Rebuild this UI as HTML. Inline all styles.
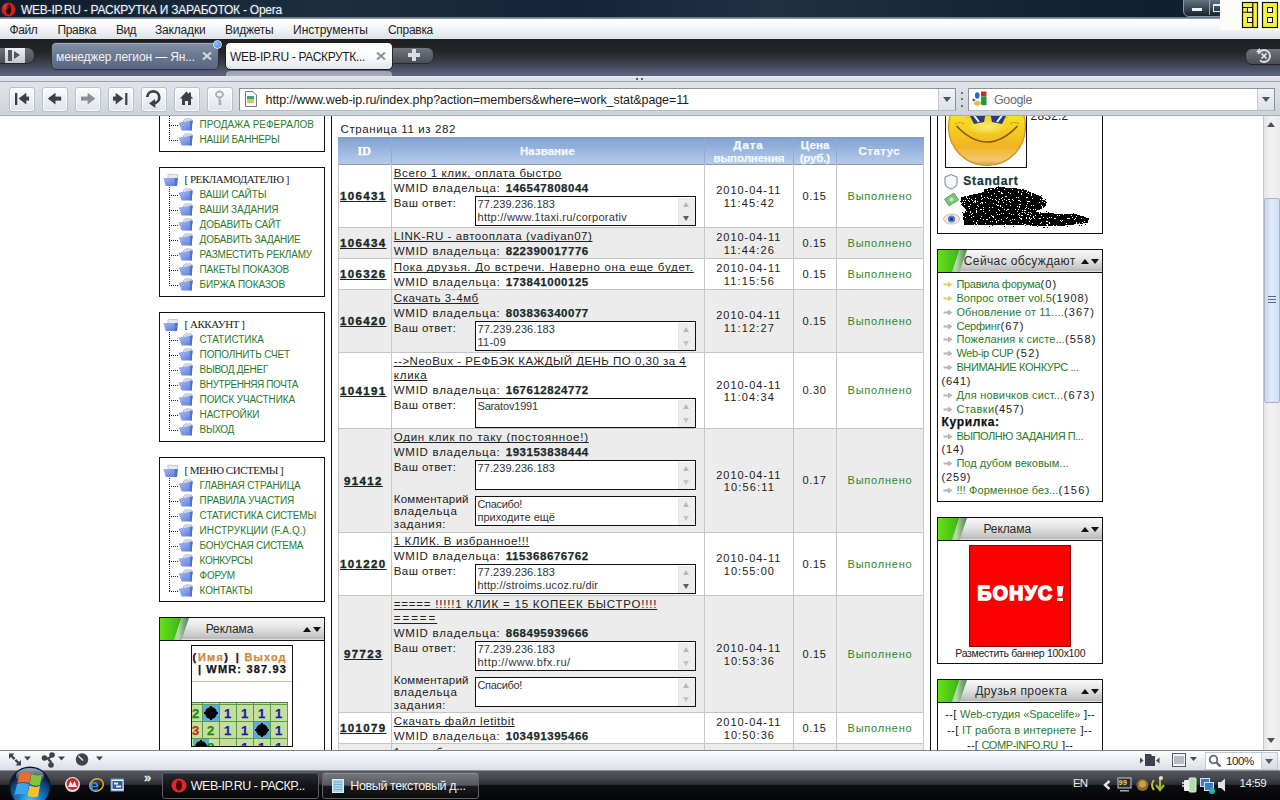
<!DOCTYPE html>
<html><head><meta charset="utf-8">
<style>
*{margin:0;padding:0;box-sizing:border-box}
html,body{width:1280px;height:800px;overflow:hidden;background:#fff;font-family:"Liberation Sans",sans-serif;position:relative}
.a{position:absolute}
.t{position:absolute;white-space:nowrap;text-decoration-skip-ink:none}
.bp{display:inline-block;width:0;height:0;vertical-align:baseline}
.tbtn{position:absolute;top:87px;width:26px;height:25px;border:1px solid #b9c0c8;border-radius:3px;background:linear-gradient(#fbfcfd,#eceff2 50%,#dfe3e8);box-shadow:inset 0 0 0 1px rgba(255,255,255,.8)}
.box{position:absolute;border:1px solid #111;background:#fff}
.gh{position:absolute;height:24px;border:1px solid #111;background:linear-gradient(#f8f8f8 0%,#e6e6e6 40%,#c4c4c4 85%,#b5b5b5 92%,#f0f0f0 100%);overflow:hidden}
.gh .g1{position:absolute;left:0;top:0;width:30px;height:22px;background:linear-gradient(90deg,#68e018,#44c014 55%,#2a9a10 85%,#1e7a0c);clip-path:polygon(0 0,21.5px 0,14px 22px,0 22px)}
.gh .g2{position:absolute;left:0;top:0;width:30px;height:22px;background:linear-gradient(90deg,#8ccc80 40%,#b8dcb0 60%,#7aa874 80%,#5a7a56);clip-path:polygon(21.5px 0,29px 0,21.5px 22px,14px 22px)}
.ta{position:absolute;width:221px;height:30px;border:1px solid #111;background:#fff}
.ta .sb{position:absolute;right:0;top:1px;width:17px;height:27px;background:#ededed;border-left:1px solid #e4e4e4}
.up{position:absolute;width:0;height:0;border-left:3.5px solid transparent;border-right:3.5px solid transparent;border-bottom:5px solid #b8b8b8}
.dn{position:absolute;width:0;height:0;border-left:3.5px solid transparent;border-right:3.5px solid transparent;border-top:5px solid #bcbcbc}
.row{position:absolute;left:339px;width:584px;border-bottom:1px solid #c6c6c6}
.vl{position:absolute;width:1px;background:#c6c6c6}
.dotv{position:absolute;width:1px;background:repeating-linear-gradient(#222 0 1px,transparent 1px 2px)}
.doth{position:absolute;height:1px;background:repeating-linear-gradient(90deg,#222 0 1px,transparent 1px 2px)}
</style></head><body>

<div class="a" style="left:0;top:0;width:1280px;height:19px;background:linear-gradient(90deg,#0e1c2c 0%,#1c2d40 25%,#13253a 45%,#1e3044 60%,#132438 80%,#0e1c2c 100%)"></div>
<div class="a" style="left:0;top:17px;width:1280px;height:2px;background:linear-gradient(#5a6a7a,#9aa6b2)"></div>
<div class="a" style="left:0;top:19px;width:1280px;height:20px;background:linear-gradient(#ffffff,#f4f6f8 45%,#dde3e9)"></div>
<div class="a" style="left:0;top:39px;width:1280px;height:37px;background:linear-gradient(#1e1f21 0%,#242527 35%,#3a3d47 62%,#535a70 88%,#5c6580 100%)"></div>
<div class="a" style="left:0;top:76px;width:1280px;height:6px;background:linear-gradient(#e4e8ec,#d7dce1)"></div>
<div class="a" style="left:0;top:81px;width:1280px;height:1px;background:#9da5ae"></div>
<div class="a" style="left:0;top:82px;width:1280px;height:34px;background:linear-gradient(#dfe4e9,#d8dde3 50%,#ccd2d9)"></div>
<div class="a" style="left:0;top:115px;width:1280px;height:1px;background:#a4acb4"></div>
<svg class="a" style="left:1px;top:2px" width="16" height="15" viewBox="0 0 16 15"><ellipse cx="7.5" cy="7.5" rx="7" ry="7" fill="#d01c20"/><ellipse cx="7.5" cy="7.5" rx="2.6" ry="5" fill="#2a0808"/><ellipse cx="5" cy="5" rx="2.5" ry="3" fill="#ff7060" opacity=".35"/></svg>
<div class="t" style="left:21.00px;top:3.50px;font-size:12px;line-height:12px;color:#f3f7fa;font-family:'Liberation Sans',sans-serif;letter-spacing:-0.237px;text-shadow:0 0 2px rgba(200,220,240,.35);">WEB-IP.RU - РАСКРУТКА И ЗАРАБОТОК - Opera</div>
<div class="a" style="left:1183px;top:-3px;width:52px;height:20px;border:1px solid #8996a3;border-radius:0 0 6px 6px;background:linear-gradient(#707d8a,#3d4a57 55%,#18222d)"></div>
<div class="a" style="left:1192px;top:8px;width:10px;height:3px;background:#eef2f5"></div>
<div class="a" style="left:1209px;top:-1px;width:1px;height:16px;background:#97a3af"></div>
<div class="a" style="left:1213px;top:4px;width:9px;height:8px;border:1.5px solid #e8ecf0;border-top-width:2.5px;background:transparent"></div>
<div class="a" style="left:1220px;top:0;width:60px;height:30px;background:#fcfdf8"></div>
<svg class="a" style="left:1240px;top:0" width="40" height="30" viewBox="0 0 40 30">
<rect x="2.5" y="2.5" width="15" height="25" fill="#f6f33c" stroke="#111" stroke-width="1.2"/>
<path d="M12.8 3 V27" stroke="#111" stroke-width="1.2"/>
<path d="M3 7.5 H12.8 M3 12.2 H12.8 M7.5 8 V12" stroke="#111" stroke-width="1"/>
<rect x="7.5" y="7.5" width="5" height="4.7" fill="#fff" stroke="#111" stroke-width="1"/>
<rect x="7.5" y="17.5" width="5" height="5" fill="#fff" stroke="#111" stroke-width="1"/>
<rect x="22.5" y="2.5" width="15" height="25" fill="#f6f33c" stroke="#111" stroke-width="1.2"/>
<rect x="27.5" y="7.5" width="5" height="5" fill="#fff" stroke="#111" stroke-width="1"/>
<rect x="27.5" y="17.5" width="5" height="5" fill="#fff" stroke="#111" stroke-width="1"/>
</svg>
<div class="t" style="left:9.50px;top:23.50px;font-size:12px;line-height:12px;color:#1e1e1e;font-family:'Liberation Sans',sans-serif;letter-spacing:-0.379px;">Файл</div>
<div class="t" style="left:57.50px;top:23.50px;font-size:12px;line-height:12px;color:#1e1e1e;font-family:'Liberation Sans',sans-serif;letter-spacing:-0.341px;">Правка</div>
<div class="t" style="left:116.00px;top:23.50px;font-size:12px;line-height:12px;color:#1e1e1e;font-family:'Liberation Sans',sans-serif;letter-spacing:-0.573px;">Вид</div>
<div class="t" style="left:155.00px;top:23.50px;font-size:12px;line-height:12px;color:#1e1e1e;font-family:'Liberation Sans',sans-serif;letter-spacing:-0.180px;">Закладки</div>
<div class="t" style="left:225.00px;top:23.50px;font-size:12px;line-height:12px;color:#1e1e1e;font-family:'Liberation Sans',sans-serif;letter-spacing:-0.234px;">Виджеты</div>
<div class="t" style="left:293.00px;top:23.50px;font-size:12px;line-height:12px;color:#1e1e1e;font-family:'Liberation Sans',sans-serif;letter-spacing:0.016px;">Инструменты</div>
<div class="t" style="left:388.00px;top:23.50px;font-size:12px;line-height:12px;color:#1e1e1e;font-family:'Liberation Sans',sans-serif;letter-spacing:-0.297px;">Справка</div>
<div class="a" style="left:-8px;top:47px;width:43px;height:17px;border-radius:8px;background:linear-gradient(#6b7079,#4a4e56);border:1px solid #25272b"></div>
<div class="a" style="left:5px;top:48px;width:20px;height:15px;background:linear-gradient(#eef0f2,#c3c8ce)"></div>
<div class="a" style="left:8px;top:50px;width:4px;height:11px;background:#50545c"></div>
<div class="a" style="left:14px;top:51px;width:0;height:0;border-top:4.5px solid transparent;border-bottom:4.5px solid transparent;border-left:6px solid #50545c"></div>
<div class="a" style="left:51px;top:42px;width:168px;height:28px;border-radius:5px;background:linear-gradient(#8391a8,#6c7992 45%,#5a667f);border:1px solid #2c313c;box-shadow:inset 0 1px 0 rgba(255,255,255,.25)"></div>
<div class="a" style="left:213px;top:40px;width:9px;height:9px;border-radius:50%;background:radial-gradient(circle at 40% 40%,#8ec0ff,#3a7fd8);border:1px solid #e0e8f4"></div>
<div class="t" style="left:56.00px;top:51.30px;font-size:12px;line-height:12px;color:#f0f3f7;font-family:'Liberation Sans',sans-serif;letter-spacing:-0.118px;">менеджер легион — Ян...</div>
<svg class="a" style="left:201px;top:51px" width="12" height="10"><path d="M2 1.5 L10 8.5 M10 1.5 L2 8.5" stroke="#d3d8df" stroke-width="2.2"/></svg>
<div class="a" style="left:225px;top:42px;width:168px;height:28px;border-radius:5px;background:linear-gradient(#ffffff,#fafbfc 55%,#e2e6ec);border:1px solid #1a1c20"></div>
<div class="a" style="left:226px;top:71px;width:166px;height:5px;border-radius:4px 4px 0 0;background:linear-gradient(#9aa0b2,#a8aebd)"></div>
<div class="t" style="left:230.00px;top:51.00px;font-size:12px;line-height:12px;color:#1c1c1c;font-family:'Liberation Sans',sans-serif;letter-spacing:-0.336px;">WEB-IP.RU - РАСКРУТК...</div>
<svg class="a" style="left:375px;top:51px" width="12" height="10"><path d="M2 1.5 L10 8.5 M10 1.5 L2 8.5" stroke="#8f949b" stroke-width="2.2"/></svg>
<div class="a" style="left:392px;top:47px;width:42px;height:17px;border-radius:0 7px 7px 0;background:linear-gradient(#70757e,#4a4e57);border:1px solid #27292d"></div>
<div class="a" style="left:408px;top:53px;width:12px;height:4px;background:#d9dce1"></div>
<div class="a" style="left:412px;top:49px;width:4px;height:12px;background:#d9dce1"></div>
<div class="a" style="left:1245px;top:48px;width:42px;height:17px;border-radius:7px;background:linear-gradient(#70757e,#484c55);border:1px solid #222428"></div>
<svg class="a" style="left:1250px;top:45px" width="30" height="22"><circle cx="14" cy="11" r="6" fill="none" stroke="#dde1e6" stroke-width="1.8" stroke-dasharray="30 8" transform="rotate(200 14 11)"/><path d="M9.5 3 L6 7 L11 8 Z" fill="#dde1e6"/><path d="M11.5 8.5 L16.5 13.5 M16.5 8.5 L11.5 13.5" stroke="#e6e9ed" stroke-width="1.7"/></svg>
<div class="a" style="left:636px;top:78px;width:2px;height:2px;background:#5a5f66"></div>
<div class="a" style="left:641px;top:78px;width:2px;height:2px;background:#5a5f66"></div>
<div class="tbtn" style="left:9px"></div>
<div class="tbtn" style="left:42px"></div>
<div class="tbtn" style="left:75px"></div>
<div class="tbtn" style="left:108px"></div>
<div class="tbtn" style="left:141px"></div>
<div class="tbtn" style="left:174px"></div>
<div class="tbtn" style="left:207px"></div>
<svg class="a" style="left:0;top:82px" width="240" height="34" viewBox="0 0 240 34">
 <g fill="#3b4049">
  <rect x="15" y="11" width="2.3" height="12"/>
  <path d="M18.6 16.6 L26.3 10.8 V22.4 Z"/><rect x="25.5" y="14.6" width="3.6" height="4"/>
  <path d="M47.8 16.6 L55.5 10.8 V22.4 Z"/><rect x="55" y="14.6" width="6.2" height="4"/>
  <path d="M95.3 16.6 L87.6 10.8 V22.4 Z" fill="#8a8f97"/><rect x="81" y="14.6" width="7" height="4" fill="#8a8f97"/>
  <rect x="113" y="14.6" width="4" height="4"/><path d="M123.3 16.6 L115.6 10.8 V22.4 Z"/>
  <rect x="125.2" y="11" width="2.2" height="12"/>
  <path d="M147.3 15 A6 6 0 1 1 154 21.3" fill="none" stroke="#3b4049" stroke-width="2.7"/>
  <path d="M149 21.5 L155 17 L155.5 26 Z"/>
  <path d="M186.5 9.5 L179.8 16.5 H182 V23 H185 V19 H188 V23 H191 V16.5 H193.2 Z"/>
  <rect x="189" y="10.5" width="2" height="4"/>
 </g>
 <g fill="none" stroke="#a9aeb5" stroke-width="1.8">
  <ellipse cx="219.5" cy="12.5" rx="3.5" ry="3"/>
  <path d="M219.5 15.5 V23 M219.5 19.5 H221.5 M219.5 22 H221.5"/>
 </g>
</svg>
<div class="a" style="left:239px;top:88px;width:717px;height:23px;background:#fff;border:1px solid #8a9199;border-bottom-color:#b5bbc2"></div>
<div class="a" style="left:938px;top:89px;width:17px;height:21px;background:linear-gradient(#f3f5f7,#dde1e6);border-left:1px solid #c4c9cf"></div>
<div class="a" style="left:942.5px;top:97px;width:0;height:0;border-left:4px solid transparent;border-right:4px solid transparent;border-top:5px solid #4e5661"></div>
<svg class="a" style="left:244px;top:90px" width="14" height="18"><path d="M1.5 1.5 H9 L12.5 5 V16.5 H1.5 Z" fill="#f6f8f9" stroke="#6d7883"/><rect x="3" y="6" width="7" height="3" fill="#3aa58a"/><rect x="3" y="9" width="7" height="2" fill="#b6d36a"/><rect x="3" y="11" width="7" height="2" fill="#e7c05a"/></svg>
<div class="t" style="left:265.60px;top:94.00px;font-size:12.5px;line-height:12.5px;color:#1b1b1b;font-family:'Liberation Sans',sans-serif;letter-spacing:-0.089px;">http://www.web-ip.ru/index.php?action=members&amp;where=work_stat&amp;page=11</div>
<div class="a" style="left:961px;top:92px;width:2px;height:2px;background:#46505e;border-radius:1px"></div>
<div class="a" style="left:961px;top:98px;width:2px;height:2px;background:#46505e;border-radius:1px"></div>
<div class="a" style="left:961px;top:105px;width:2px;height:2px;background:#46505e;border-radius:1px"></div>
<div class="a" style="left:968px;top:88px;width:307px;height:23px;background:#fff;border:1px solid #8a9199;border-bottom-color:#b5bbc2"></div>
<div class="a" style="left:1257px;top:89px;width:17px;height:21px;background:linear-gradient(#f3f5f7,#dde1e6);border-left:1px solid #c4c9cf"></div>
<div class="a" style="left:1261.5px;top:97px;width:0;height:0;border-left:4px solid transparent;border-right:4px solid transparent;border-top:5px solid #4e5661"></div>
<svg class="a" style="left:971px;top:89px" width="20" height="20">
 <ellipse cx="6.3" cy="6.5" rx="2.3" ry="3.2" fill="#2c6cc0"/>
 <path d="M1.5 9.5 L5 11 L1.8 12.5 Z" fill="#3646a8"/>
 <ellipse cx="6.3" cy="14.3" rx="3.3" ry="2.5" fill="#e6c33e"/>
 <path d="M10 2.5 H15.5 V7.5 H10 Z" fill="#d8281a"/>
 <path d="M10 7.5 H15.5 V16.3 H10.8 Q9 14 10.2 12 Z" fill="#1d9a3c"/>
</svg>
<div class="t" style="left:994.00px;top:94.00px;font-size:12.5px;line-height:12.5px;color:#6a6a6a;font-family:'Liberation Sans',sans-serif;letter-spacing:-0.385px;">Google</div>
<div class="a" style="left:0;top:0;width:1280px;height:800px;clip-path:inset(116px 17px 50px 0)">
<div class="a" style="left:331px;top:116px;width:1px;height:634px;background:#111"></div>
<div class="a" style="left:930px;top:116px;width:1px;height:634px;background:#111"></div>
<div class="box" style="left:159px;top:100px;width:166px;height:52px;border-top:none"></div>
<div class="doth" style="left:169px;top:125px;width:10px"></div>
<svg class="a" style="left:178px;top:118px" width="16" height="14" viewBox="0 0 16 14">
<defs><linearGradient id="fi" x1="0" y1="0" x2="1" y2="1"><stop offset="0" stop-color="#a9baf2"/><stop offset=".6" stop-color="#7d97e4"/><stop offset="1" stop-color="#5574d0"/></linearGradient></defs>
<path d="M5.5 5 Q5 1.5 7.5 1 Q9 .2 10 1.3 Q11.5 .3 13 1 Q14.8 1.5 14.5 5 Z" fill="#f4f6fb" stroke="#8c95aa" stroke-width=".7"/>
<path d="M7.5 2.5 Q9 1.8 10 3 M10.5 2.5 Q12 1.8 13 3" fill="none" stroke="#9aa2b6" stroke-width=".6"/>
<path d="M.6 4.6 L14.4 2.6 L13.8 12.6 H3.6 Z" fill="url(#fi)"/>
<path d="M11.8 3 L14.4 2.6 L13.8 12.6 H12.4 Z" fill="#4c66be" opacity=".8"/>
</svg>
<div class="t" style="left:199.60px;top:120.00px;font-size:10px;line-height:10px;color:#2a7a2a;font-family:'Liberation Sans',sans-serif;letter-spacing:-0.026px;">ПРОДАЖА РЕФЕРАЛОВ</div>
<div class="doth" style="left:169px;top:140px;width:10px"></div>
<svg class="a" style="left:178px;top:133px" width="16" height="14" viewBox="0 0 16 14">
<defs><linearGradient id="fi" x1="0" y1="0" x2="1" y2="1"><stop offset="0" stop-color="#a9baf2"/><stop offset=".6" stop-color="#7d97e4"/><stop offset="1" stop-color="#5574d0"/></linearGradient></defs>
<path d="M5.5 5 Q5 1.5 7.5 1 Q9 .2 10 1.3 Q11.5 .3 13 1 Q14.8 1.5 14.5 5 Z" fill="#f4f6fb" stroke="#8c95aa" stroke-width=".7"/>
<path d="M7.5 2.5 Q9 1.8 10 3 M10.5 2.5 Q12 1.8 13 3" fill="none" stroke="#9aa2b6" stroke-width=".6"/>
<path d="M.6 4.6 L14.4 2.6 L13.8 12.6 H3.6 Z" fill="url(#fi)"/>
<path d="M11.8 3 L14.4 2.6 L13.8 12.6 H12.4 Z" fill="#4c66be" opacity=".8"/>
</svg>
<div class="t" style="left:199.60px;top:135.00px;font-size:10px;line-height:10px;color:#2a7a2a;font-family:'Liberation Sans',sans-serif;letter-spacing:-0.214px;">НАШИ БАННЕРЫ</div>
<div class="dotv" style="left:169px;top:100px;height:40px"></div>
<div class="box" style="left:159px;top:167px;width:166px;height:130px"></div>
<svg class="a" style="left:163px;top:173px" width="17" height="15" viewBox="0 0 17 15">
<defs><linearGradient id="fh" x1="0" y1="0" x2="1" y2="1"><stop offset="0" stop-color="#9fb3f0"/><stop offset=".6" stop-color="#7690e0"/><stop offset="1" stop-color="#5070cc"/></linearGradient></defs>
<path d="M5 7 V1.5 Q7 .3 9 1.5 H14.6 V7 Z" fill="#e4ecfa" stroke="#a0aec8" stroke-width=".6"/>
<path d="M.4 5 H14.8 L14 13 H2.8 Z" fill="url(#fh)"/>
<path d="M11.5 5 H14.8 L14 13 H12.2 Z" fill="#4a66c0" opacity=".7"/>
</svg>
<div class="t" style="left:184.40px;top:174.00px;font-size:11px;line-height:11px;color:#1a1a1a;font-family:'Liberation Serif',serif;letter-spacing:-0.437px;">[ РЕКЛАМОДАТЕЛЮ ]</div>
<div class="doth" style="left:169px;top:195px;width:10px"></div>
<svg class="a" style="left:178px;top:188px" width="16" height="14" viewBox="0 0 16 14">
<defs><linearGradient id="fi" x1="0" y1="0" x2="1" y2="1"><stop offset="0" stop-color="#a9baf2"/><stop offset=".6" stop-color="#7d97e4"/><stop offset="1" stop-color="#5574d0"/></linearGradient></defs>
<path d="M5.5 5 Q5 1.5 7.5 1 Q9 .2 10 1.3 Q11.5 .3 13 1 Q14.8 1.5 14.5 5 Z" fill="#f4f6fb" stroke="#8c95aa" stroke-width=".7"/>
<path d="M7.5 2.5 Q9 1.8 10 3 M10.5 2.5 Q12 1.8 13 3" fill="none" stroke="#9aa2b6" stroke-width=".6"/>
<path d="M.6 4.6 L14.4 2.6 L13.8 12.6 H3.6 Z" fill="url(#fi)"/>
<path d="M11.8 3 L14.4 2.6 L13.8 12.6 H12.4 Z" fill="#4c66be" opacity=".8"/>
</svg>
<div class="t" style="left:199.60px;top:190.00px;font-size:10px;line-height:10px;color:#2a7a2a;font-family:'Liberation Sans',sans-serif;letter-spacing:-0.117px;">ВАШИ САЙТЫ</div>
<div class="doth" style="left:169px;top:210px;width:10px"></div>
<svg class="a" style="left:178px;top:203px" width="16" height="14" viewBox="0 0 16 14">
<defs><linearGradient id="fi" x1="0" y1="0" x2="1" y2="1"><stop offset="0" stop-color="#a9baf2"/><stop offset=".6" stop-color="#7d97e4"/><stop offset="1" stop-color="#5574d0"/></linearGradient></defs>
<path d="M5.5 5 Q5 1.5 7.5 1 Q9 .2 10 1.3 Q11.5 .3 13 1 Q14.8 1.5 14.5 5 Z" fill="#f4f6fb" stroke="#8c95aa" stroke-width=".7"/>
<path d="M7.5 2.5 Q9 1.8 10 3 M10.5 2.5 Q12 1.8 13 3" fill="none" stroke="#9aa2b6" stroke-width=".6"/>
<path d="M.6 4.6 L14.4 2.6 L13.8 12.6 H3.6 Z" fill="url(#fi)"/>
<path d="M11.8 3 L14.4 2.6 L13.8 12.6 H12.4 Z" fill="#4c66be" opacity=".8"/>
</svg>
<div class="t" style="left:199.60px;top:205.00px;font-size:10px;line-height:10px;color:#2a7a2a;font-family:'Liberation Sans',sans-serif;letter-spacing:-0.130px;">ВАШИ ЗАДАНИЯ</div>
<div class="doth" style="left:169px;top:225px;width:10px"></div>
<svg class="a" style="left:178px;top:218px" width="16" height="14" viewBox="0 0 16 14">
<defs><linearGradient id="fi" x1="0" y1="0" x2="1" y2="1"><stop offset="0" stop-color="#a9baf2"/><stop offset=".6" stop-color="#7d97e4"/><stop offset="1" stop-color="#5574d0"/></linearGradient></defs>
<path d="M5.5 5 Q5 1.5 7.5 1 Q9 .2 10 1.3 Q11.5 .3 13 1 Q14.8 1.5 14.5 5 Z" fill="#f4f6fb" stroke="#8c95aa" stroke-width=".7"/>
<path d="M7.5 2.5 Q9 1.8 10 3 M10.5 2.5 Q12 1.8 13 3" fill="none" stroke="#9aa2b6" stroke-width=".6"/>
<path d="M.6 4.6 L14.4 2.6 L13.8 12.6 H3.6 Z" fill="url(#fi)"/>
<path d="M11.8 3 L14.4 2.6 L13.8 12.6 H12.4 Z" fill="#4c66be" opacity=".8"/>
</svg>
<div class="t" style="left:199.60px;top:220.00px;font-size:10px;line-height:10px;color:#2a7a2a;font-family:'Liberation Sans',sans-serif;letter-spacing:-0.188px;">ДОБАВИТЬ САЙТ</div>
<div class="doth" style="left:169px;top:240px;width:10px"></div>
<svg class="a" style="left:178px;top:233px" width="16" height="14" viewBox="0 0 16 14">
<defs><linearGradient id="fi" x1="0" y1="0" x2="1" y2="1"><stop offset="0" stop-color="#a9baf2"/><stop offset=".6" stop-color="#7d97e4"/><stop offset="1" stop-color="#5574d0"/></linearGradient></defs>
<path d="M5.5 5 Q5 1.5 7.5 1 Q9 .2 10 1.3 Q11.5 .3 13 1 Q14.8 1.5 14.5 5 Z" fill="#f4f6fb" stroke="#8c95aa" stroke-width=".7"/>
<path d="M7.5 2.5 Q9 1.8 10 3 M10.5 2.5 Q12 1.8 13 3" fill="none" stroke="#9aa2b6" stroke-width=".6"/>
<path d="M.6 4.6 L14.4 2.6 L13.8 12.6 H3.6 Z" fill="url(#fi)"/>
<path d="M11.8 3 L14.4 2.6 L13.8 12.6 H12.4 Z" fill="#4c66be" opacity=".8"/>
</svg>
<div class="t" style="left:199.60px;top:235.00px;font-size:10px;line-height:10px;color:#2a7a2a;font-family:'Liberation Sans',sans-serif;letter-spacing:-0.221px;">ДОБАВИТЬ ЗАДАНИЕ</div>
<div class="doth" style="left:169px;top:255px;width:10px"></div>
<svg class="a" style="left:178px;top:248px" width="16" height="14" viewBox="0 0 16 14">
<defs><linearGradient id="fi" x1="0" y1="0" x2="1" y2="1"><stop offset="0" stop-color="#a9baf2"/><stop offset=".6" stop-color="#7d97e4"/><stop offset="1" stop-color="#5574d0"/></linearGradient></defs>
<path d="M5.5 5 Q5 1.5 7.5 1 Q9 .2 10 1.3 Q11.5 .3 13 1 Q14.8 1.5 14.5 5 Z" fill="#f4f6fb" stroke="#8c95aa" stroke-width=".7"/>
<path d="M7.5 2.5 Q9 1.8 10 3 M10.5 2.5 Q12 1.8 13 3" fill="none" stroke="#9aa2b6" stroke-width=".6"/>
<path d="M.6 4.6 L14.4 2.6 L13.8 12.6 H3.6 Z" fill="url(#fi)"/>
<path d="M11.8 3 L14.4 2.6 L13.8 12.6 H12.4 Z" fill="#4c66be" opacity=".8"/>
</svg>
<div class="t" style="left:199.60px;top:250.00px;font-size:10px;line-height:10px;color:#2a7a2a;font-family:'Liberation Sans',sans-serif;letter-spacing:-0.224px;">РАЗМЕСТИТЬ РЕКЛАМУ</div>
<div class="doth" style="left:169px;top:270px;width:10px"></div>
<svg class="a" style="left:178px;top:263px" width="16" height="14" viewBox="0 0 16 14">
<defs><linearGradient id="fi" x1="0" y1="0" x2="1" y2="1"><stop offset="0" stop-color="#a9baf2"/><stop offset=".6" stop-color="#7d97e4"/><stop offset="1" stop-color="#5574d0"/></linearGradient></defs>
<path d="M5.5 5 Q5 1.5 7.5 1 Q9 .2 10 1.3 Q11.5 .3 13 1 Q14.8 1.5 14.5 5 Z" fill="#f4f6fb" stroke="#8c95aa" stroke-width=".7"/>
<path d="M7.5 2.5 Q9 1.8 10 3 M10.5 2.5 Q12 1.8 13 3" fill="none" stroke="#9aa2b6" stroke-width=".6"/>
<path d="M.6 4.6 L14.4 2.6 L13.8 12.6 H3.6 Z" fill="url(#fi)"/>
<path d="M11.8 3 L14.4 2.6 L13.8 12.6 H12.4 Z" fill="#4c66be" opacity=".8"/>
</svg>
<div class="t" style="left:199.60px;top:265.00px;font-size:10px;line-height:10px;color:#2a7a2a;font-family:'Liberation Sans',sans-serif;letter-spacing:-0.166px;">ПАКЕТЫ ПОКАЗОВ</div>
<div class="doth" style="left:169px;top:285px;width:10px"></div>
<svg class="a" style="left:178px;top:278px" width="16" height="14" viewBox="0 0 16 14">
<defs><linearGradient id="fi" x1="0" y1="0" x2="1" y2="1"><stop offset="0" stop-color="#a9baf2"/><stop offset=".6" stop-color="#7d97e4"/><stop offset="1" stop-color="#5574d0"/></linearGradient></defs>
<path d="M5.5 5 Q5 1.5 7.5 1 Q9 .2 10 1.3 Q11.5 .3 13 1 Q14.8 1.5 14.5 5 Z" fill="#f4f6fb" stroke="#8c95aa" stroke-width=".7"/>
<path d="M7.5 2.5 Q9 1.8 10 3 M10.5 2.5 Q12 1.8 13 3" fill="none" stroke="#9aa2b6" stroke-width=".6"/>
<path d="M.6 4.6 L14.4 2.6 L13.8 12.6 H3.6 Z" fill="url(#fi)"/>
<path d="M11.8 3 L14.4 2.6 L13.8 12.6 H12.4 Z" fill="#4c66be" opacity=".8"/>
</svg>
<div class="t" style="left:199.60px;top:280.00px;font-size:10px;line-height:10px;color:#2a7a2a;font-family:'Liberation Sans',sans-serif;letter-spacing:-0.101px;">БИРЖА ПОКАЗОВ</div>
<div class="dotv" style="left:169px;top:187px;height:98px"></div>
<div class="box" style="left:159px;top:312px;width:166px;height:130px"></div>
<svg class="a" style="left:163px;top:318px" width="17" height="15" viewBox="0 0 17 15">
<defs><linearGradient id="fh" x1="0" y1="0" x2="1" y2="1"><stop offset="0" stop-color="#9fb3f0"/><stop offset=".6" stop-color="#7690e0"/><stop offset="1" stop-color="#5070cc"/></linearGradient></defs>
<path d="M5 7 V1.5 Q7 .3 9 1.5 H14.6 V7 Z" fill="#e4ecfa" stroke="#a0aec8" stroke-width=".6"/>
<path d="M.4 5 H14.8 L14 13 H2.8 Z" fill="url(#fh)"/>
<path d="M11.5 5 H14.8 L14 13 H12.2 Z" fill="#4a66c0" opacity=".7"/>
</svg>
<div class="t" style="left:184.40px;top:319.00px;font-size:11px;line-height:11px;color:#1a1a1a;font-family:'Liberation Serif',serif;letter-spacing:-0.434px;">[ АККАУНТ ]</div>
<div class="doth" style="left:169px;top:340px;width:10px"></div>
<svg class="a" style="left:178px;top:333px" width="16" height="14" viewBox="0 0 16 14">
<defs><linearGradient id="fi" x1="0" y1="0" x2="1" y2="1"><stop offset="0" stop-color="#a9baf2"/><stop offset=".6" stop-color="#7d97e4"/><stop offset="1" stop-color="#5574d0"/></linearGradient></defs>
<path d="M5.5 5 Q5 1.5 7.5 1 Q9 .2 10 1.3 Q11.5 .3 13 1 Q14.8 1.5 14.5 5 Z" fill="#f4f6fb" stroke="#8c95aa" stroke-width=".7"/>
<path d="M7.5 2.5 Q9 1.8 10 3 M10.5 2.5 Q12 1.8 13 3" fill="none" stroke="#9aa2b6" stroke-width=".6"/>
<path d="M.6 4.6 L14.4 2.6 L13.8 12.6 H3.6 Z" fill="url(#fi)"/>
<path d="M11.8 3 L14.4 2.6 L13.8 12.6 H12.4 Z" fill="#4c66be" opacity=".8"/>
</svg>
<div class="t" style="left:199.60px;top:335.00px;font-size:10px;line-height:10px;color:#2a7a2a;font-family:'Liberation Sans',sans-serif;letter-spacing:-0.013px;">СТАТИСТИКА</div>
<div class="doth" style="left:169px;top:355px;width:10px"></div>
<svg class="a" style="left:178px;top:348px" width="16" height="14" viewBox="0 0 16 14">
<defs><linearGradient id="fi" x1="0" y1="0" x2="1" y2="1"><stop offset="0" stop-color="#a9baf2"/><stop offset=".6" stop-color="#7d97e4"/><stop offset="1" stop-color="#5574d0"/></linearGradient></defs>
<path d="M5.5 5 Q5 1.5 7.5 1 Q9 .2 10 1.3 Q11.5 .3 13 1 Q14.8 1.5 14.5 5 Z" fill="#f4f6fb" stroke="#8c95aa" stroke-width=".7"/>
<path d="M7.5 2.5 Q9 1.8 10 3 M10.5 2.5 Q12 1.8 13 3" fill="none" stroke="#9aa2b6" stroke-width=".6"/>
<path d="M.6 4.6 L14.4 2.6 L13.8 12.6 H3.6 Z" fill="url(#fi)"/>
<path d="M11.8 3 L14.4 2.6 L13.8 12.6 H12.4 Z" fill="#4c66be" opacity=".8"/>
</svg>
<div class="t" style="left:199.60px;top:350.00px;font-size:10px;line-height:10px;color:#2a7a2a;font-family:'Liberation Sans',sans-serif;letter-spacing:-0.156px;">ПОПОЛНИТЬ СЧЕТ</div>
<div class="doth" style="left:169px;top:370px;width:10px"></div>
<svg class="a" style="left:178px;top:363px" width="16" height="14" viewBox="0 0 16 14">
<defs><linearGradient id="fi" x1="0" y1="0" x2="1" y2="1"><stop offset="0" stop-color="#a9baf2"/><stop offset=".6" stop-color="#7d97e4"/><stop offset="1" stop-color="#5574d0"/></linearGradient></defs>
<path d="M5.5 5 Q5 1.5 7.5 1 Q9 .2 10 1.3 Q11.5 .3 13 1 Q14.8 1.5 14.5 5 Z" fill="#f4f6fb" stroke="#8c95aa" stroke-width=".7"/>
<path d="M7.5 2.5 Q9 1.8 10 3 M10.5 2.5 Q12 1.8 13 3" fill="none" stroke="#9aa2b6" stroke-width=".6"/>
<path d="M.6 4.6 L14.4 2.6 L13.8 12.6 H3.6 Z" fill="url(#fi)"/>
<path d="M11.8 3 L14.4 2.6 L13.8 12.6 H12.4 Z" fill="#4c66be" opacity=".8"/>
</svg>
<div class="t" style="left:199.60px;top:365.00px;font-size:10px;line-height:10px;color:#2a7a2a;font-family:'Liberation Sans',sans-serif;letter-spacing:-0.302px;">ВЫВОД ДЕНЕГ</div>
<div class="doth" style="left:169px;top:385px;width:10px"></div>
<svg class="a" style="left:178px;top:378px" width="16" height="14" viewBox="0 0 16 14">
<defs><linearGradient id="fi" x1="0" y1="0" x2="1" y2="1"><stop offset="0" stop-color="#a9baf2"/><stop offset=".6" stop-color="#7d97e4"/><stop offset="1" stop-color="#5574d0"/></linearGradient></defs>
<path d="M5.5 5 Q5 1.5 7.5 1 Q9 .2 10 1.3 Q11.5 .3 13 1 Q14.8 1.5 14.5 5 Z" fill="#f4f6fb" stroke="#8c95aa" stroke-width=".7"/>
<path d="M7.5 2.5 Q9 1.8 10 3 M10.5 2.5 Q12 1.8 13 3" fill="none" stroke="#9aa2b6" stroke-width=".6"/>
<path d="M.6 4.6 L14.4 2.6 L13.8 12.6 H3.6 Z" fill="url(#fi)"/>
<path d="M11.8 3 L14.4 2.6 L13.8 12.6 H12.4 Z" fill="#4c66be" opacity=".8"/>
</svg>
<div class="t" style="left:199.60px;top:380.00px;font-size:10px;line-height:10px;color:#2a7a2a;font-family:'Liberation Sans',sans-serif;letter-spacing:-0.426px;">ВНУТРЕННЯЯ ПОЧТА</div>
<div class="doth" style="left:169px;top:400px;width:10px"></div>
<svg class="a" style="left:178px;top:393px" width="16" height="14" viewBox="0 0 16 14">
<defs><linearGradient id="fi" x1="0" y1="0" x2="1" y2="1"><stop offset="0" stop-color="#a9baf2"/><stop offset=".6" stop-color="#7d97e4"/><stop offset="1" stop-color="#5574d0"/></linearGradient></defs>
<path d="M5.5 5 Q5 1.5 7.5 1 Q9 .2 10 1.3 Q11.5 .3 13 1 Q14.8 1.5 14.5 5 Z" fill="#f4f6fb" stroke="#8c95aa" stroke-width=".7"/>
<path d="M7.5 2.5 Q9 1.8 10 3 M10.5 2.5 Q12 1.8 13 3" fill="none" stroke="#9aa2b6" stroke-width=".6"/>
<path d="M.6 4.6 L14.4 2.6 L13.8 12.6 H3.6 Z" fill="url(#fi)"/>
<path d="M11.8 3 L14.4 2.6 L13.8 12.6 H12.4 Z" fill="#4c66be" opacity=".8"/>
</svg>
<div class="t" style="left:199.60px;top:395.00px;font-size:10px;line-height:10px;color:#2a7a2a;font-family:'Liberation Sans',sans-serif;letter-spacing:-0.131px;">ПОИСК УЧАСТНИКА</div>
<div class="doth" style="left:169px;top:415px;width:10px"></div>
<svg class="a" style="left:178px;top:408px" width="16" height="14" viewBox="0 0 16 14">
<defs><linearGradient id="fi" x1="0" y1="0" x2="1" y2="1"><stop offset="0" stop-color="#a9baf2"/><stop offset=".6" stop-color="#7d97e4"/><stop offset="1" stop-color="#5574d0"/></linearGradient></defs>
<path d="M5.5 5 Q5 1.5 7.5 1 Q9 .2 10 1.3 Q11.5 .3 13 1 Q14.8 1.5 14.5 5 Z" fill="#f4f6fb" stroke="#8c95aa" stroke-width=".7"/>
<path d="M7.5 2.5 Q9 1.8 10 3 M10.5 2.5 Q12 1.8 13 3" fill="none" stroke="#9aa2b6" stroke-width=".6"/>
<path d="M.6 4.6 L14.4 2.6 L13.8 12.6 H3.6 Z" fill="url(#fi)"/>
<path d="M11.8 3 L14.4 2.6 L13.8 12.6 H12.4 Z" fill="#4c66be" opacity=".8"/>
</svg>
<div class="t" style="left:199.60px;top:410.00px;font-size:10px;line-height:10px;color:#2a7a2a;font-family:'Liberation Sans',sans-serif;letter-spacing:-0.145px;">НАСТРОЙКИ</div>
<div class="doth" style="left:169px;top:430px;width:10px"></div>
<svg class="a" style="left:178px;top:423px" width="16" height="14" viewBox="0 0 16 14">
<defs><linearGradient id="fi" x1="0" y1="0" x2="1" y2="1"><stop offset="0" stop-color="#a9baf2"/><stop offset=".6" stop-color="#7d97e4"/><stop offset="1" stop-color="#5574d0"/></linearGradient></defs>
<path d="M5.5 5 Q5 1.5 7.5 1 Q9 .2 10 1.3 Q11.5 .3 13 1 Q14.8 1.5 14.5 5 Z" fill="#f4f6fb" stroke="#8c95aa" stroke-width=".7"/>
<path d="M7.5 2.5 Q9 1.8 10 3 M10.5 2.5 Q12 1.8 13 3" fill="none" stroke="#9aa2b6" stroke-width=".6"/>
<path d="M.6 4.6 L14.4 2.6 L13.8 12.6 H3.6 Z" fill="url(#fi)"/>
<path d="M11.8 3 L14.4 2.6 L13.8 12.6 H12.4 Z" fill="#4c66be" opacity=".8"/>
</svg>
<div class="t" style="left:199.60px;top:425.00px;font-size:10px;line-height:10px;color:#2a7a2a;font-family:'Liberation Sans',sans-serif;letter-spacing:-0.361px;">ВЫХОД</div>
<div class="dotv" style="left:169px;top:332px;height:98px"></div>
<div class="box" style="left:159px;top:457px;width:166px;height:145px"></div>
<svg class="a" style="left:163px;top:463.5px" width="17" height="15" viewBox="0 0 17 15">
<defs><linearGradient id="fh" x1="0" y1="0" x2="1" y2="1"><stop offset="0" stop-color="#9fb3f0"/><stop offset=".6" stop-color="#7690e0"/><stop offset="1" stop-color="#5070cc"/></linearGradient></defs>
<path d="M5 7 V1.5 Q7 .3 9 1.5 H14.6 V7 Z" fill="#e4ecfa" stroke="#a0aec8" stroke-width=".6"/>
<path d="M.4 5 H14.8 L14 13 H2.8 Z" fill="url(#fh)"/>
<path d="M11.5 5 H14.8 L14 13 H12.2 Z" fill="#4a66c0" opacity=".7"/>
</svg>
<div class="t" style="left:184.40px;top:464.50px;font-size:11px;line-height:11px;color:#1a1a1a;font-family:'Liberation Serif',serif;letter-spacing:-0.492px;">[ МЕНЮ СИСТЕМЫ ]</div>
<div class="doth" style="left:169px;top:485.5px;width:10px"></div>
<svg class="a" style="left:178px;top:478.5px" width="16" height="14" viewBox="0 0 16 14">
<defs><linearGradient id="fi" x1="0" y1="0" x2="1" y2="1"><stop offset="0" stop-color="#a9baf2"/><stop offset=".6" stop-color="#7d97e4"/><stop offset="1" stop-color="#5574d0"/></linearGradient></defs>
<path d="M5.5 5 Q5 1.5 7.5 1 Q9 .2 10 1.3 Q11.5 .3 13 1 Q14.8 1.5 14.5 5 Z" fill="#f4f6fb" stroke="#8c95aa" stroke-width=".7"/>
<path d="M7.5 2.5 Q9 1.8 10 3 M10.5 2.5 Q12 1.8 13 3" fill="none" stroke="#9aa2b6" stroke-width=".6"/>
<path d="M.6 4.6 L14.4 2.6 L13.8 12.6 H3.6 Z" fill="url(#fi)"/>
<path d="M11.8 3 L14.4 2.6 L13.8 12.6 H12.4 Z" fill="#4c66be" opacity=".8"/>
</svg>
<div class="t" style="left:199.60px;top:480.50px;font-size:10px;line-height:10px;color:#2a7a2a;font-family:'Liberation Sans',sans-serif;letter-spacing:-0.119px;">ГЛАВНАЯ СТРАНИЦА</div>
<div class="doth" style="left:169px;top:500.5px;width:10px"></div>
<svg class="a" style="left:178px;top:493.5px" width="16" height="14" viewBox="0 0 16 14">
<defs><linearGradient id="fi" x1="0" y1="0" x2="1" y2="1"><stop offset="0" stop-color="#a9baf2"/><stop offset=".6" stop-color="#7d97e4"/><stop offset="1" stop-color="#5574d0"/></linearGradient></defs>
<path d="M5.5 5 Q5 1.5 7.5 1 Q9 .2 10 1.3 Q11.5 .3 13 1 Q14.8 1.5 14.5 5 Z" fill="#f4f6fb" stroke="#8c95aa" stroke-width=".7"/>
<path d="M7.5 2.5 Q9 1.8 10 3 M10.5 2.5 Q12 1.8 13 3" fill="none" stroke="#9aa2b6" stroke-width=".6"/>
<path d="M.6 4.6 L14.4 2.6 L13.8 12.6 H3.6 Z" fill="url(#fi)"/>
<path d="M11.8 3 L14.4 2.6 L13.8 12.6 H12.4 Z" fill="#4c66be" opacity=".8"/>
</svg>
<div class="t" style="left:199.60px;top:495.50px;font-size:10px;line-height:10px;color:#2a7a2a;font-family:'Liberation Sans',sans-serif;letter-spacing:-0.147px;">ПРАВИЛА УЧАСТИЯ</div>
<div class="doth" style="left:169px;top:515.5px;width:10px"></div>
<svg class="a" style="left:178px;top:508.5px" width="16" height="14" viewBox="0 0 16 14">
<defs><linearGradient id="fi" x1="0" y1="0" x2="1" y2="1"><stop offset="0" stop-color="#a9baf2"/><stop offset=".6" stop-color="#7d97e4"/><stop offset="1" stop-color="#5574d0"/></linearGradient></defs>
<path d="M5.5 5 Q5 1.5 7.5 1 Q9 .2 10 1.3 Q11.5 .3 13 1 Q14.8 1.5 14.5 5 Z" fill="#f4f6fb" stroke="#8c95aa" stroke-width=".7"/>
<path d="M7.5 2.5 Q9 1.8 10 3 M10.5 2.5 Q12 1.8 13 3" fill="none" stroke="#9aa2b6" stroke-width=".6"/>
<path d="M.6 4.6 L14.4 2.6 L13.8 12.6 H3.6 Z" fill="url(#fi)"/>
<path d="M11.8 3 L14.4 2.6 L13.8 12.6 H12.4 Z" fill="#4c66be" opacity=".8"/>
</svg>
<div class="t" style="left:199.60px;top:510.50px;font-size:10px;line-height:10px;color:#2a7a2a;font-family:'Liberation Sans',sans-serif;letter-spacing:-0.104px;">СТАТИСТИКА СИСТЕМЫ</div>
<div class="doth" style="left:169px;top:530.5px;width:10px"></div>
<svg class="a" style="left:178px;top:523.5px" width="16" height="14" viewBox="0 0 16 14">
<defs><linearGradient id="fi" x1="0" y1="0" x2="1" y2="1"><stop offset="0" stop-color="#a9baf2"/><stop offset=".6" stop-color="#7d97e4"/><stop offset="1" stop-color="#5574d0"/></linearGradient></defs>
<path d="M5.5 5 Q5 1.5 7.5 1 Q9 .2 10 1.3 Q11.5 .3 13 1 Q14.8 1.5 14.5 5 Z" fill="#f4f6fb" stroke="#8c95aa" stroke-width=".7"/>
<path d="M7.5 2.5 Q9 1.8 10 3 M10.5 2.5 Q12 1.8 13 3" fill="none" stroke="#9aa2b6" stroke-width=".6"/>
<path d="M.6 4.6 L14.4 2.6 L13.8 12.6 H3.6 Z" fill="url(#fi)"/>
<path d="M11.8 3 L14.4 2.6 L13.8 12.6 H12.4 Z" fill="#4c66be" opacity=".8"/>
</svg>
<div class="t" style="left:199.60px;top:525.50px;font-size:10px;line-height:10px;color:#2a7a2a;font-family:'Liberation Sans',sans-serif;letter-spacing:0.072px;">ИНСТРУКЦИИ (F.A.Q.)</div>
<div class="doth" style="left:169px;top:545.5px;width:10px"></div>
<svg class="a" style="left:178px;top:538.5px" width="16" height="14" viewBox="0 0 16 14">
<defs><linearGradient id="fi" x1="0" y1="0" x2="1" y2="1"><stop offset="0" stop-color="#a9baf2"/><stop offset=".6" stop-color="#7d97e4"/><stop offset="1" stop-color="#5574d0"/></linearGradient></defs>
<path d="M5.5 5 Q5 1.5 7.5 1 Q9 .2 10 1.3 Q11.5 .3 13 1 Q14.8 1.5 14.5 5 Z" fill="#f4f6fb" stroke="#8c95aa" stroke-width=".7"/>
<path d="M7.5 2.5 Q9 1.8 10 3 M10.5 2.5 Q12 1.8 13 3" fill="none" stroke="#9aa2b6" stroke-width=".6"/>
<path d="M.6 4.6 L14.4 2.6 L13.8 12.6 H3.6 Z" fill="url(#fi)"/>
<path d="M11.8 3 L14.4 2.6 L13.8 12.6 H12.4 Z" fill="#4c66be" opacity=".8"/>
</svg>
<div class="t" style="left:199.60px;top:540.50px;font-size:10px;line-height:10px;color:#2a7a2a;font-family:'Liberation Sans',sans-serif;letter-spacing:-0.275px;">БОНУСНАЯ СИСТЕМА</div>
<div class="doth" style="left:169px;top:560.5px;width:10px"></div>
<svg class="a" style="left:178px;top:553.5px" width="16" height="14" viewBox="0 0 16 14">
<defs><linearGradient id="fi" x1="0" y1="0" x2="1" y2="1"><stop offset="0" stop-color="#a9baf2"/><stop offset=".6" stop-color="#7d97e4"/><stop offset="1" stop-color="#5574d0"/></linearGradient></defs>
<path d="M5.5 5 Q5 1.5 7.5 1 Q9 .2 10 1.3 Q11.5 .3 13 1 Q14.8 1.5 14.5 5 Z" fill="#f4f6fb" stroke="#8c95aa" stroke-width=".7"/>
<path d="M7.5 2.5 Q9 1.8 10 3 M10.5 2.5 Q12 1.8 13 3" fill="none" stroke="#9aa2b6" stroke-width=".6"/>
<path d="M.6 4.6 L14.4 2.6 L13.8 12.6 H3.6 Z" fill="url(#fi)"/>
<path d="M11.8 3 L14.4 2.6 L13.8 12.6 H12.4 Z" fill="#4c66be" opacity=".8"/>
</svg>
<div class="t" style="left:199.60px;top:555.50px;font-size:10px;line-height:10px;color:#2a7a2a;font-family:'Liberation Sans',sans-serif;letter-spacing:-0.343px;">КОНКУРСЫ</div>
<div class="doth" style="left:169px;top:575.5px;width:10px"></div>
<svg class="a" style="left:178px;top:568.5px" width="16" height="14" viewBox="0 0 16 14">
<defs><linearGradient id="fi" x1="0" y1="0" x2="1" y2="1"><stop offset="0" stop-color="#a9baf2"/><stop offset=".6" stop-color="#7d97e4"/><stop offset="1" stop-color="#5574d0"/></linearGradient></defs>
<path d="M5.5 5 Q5 1.5 7.5 1 Q9 .2 10 1.3 Q11.5 .3 13 1 Q14.8 1.5 14.5 5 Z" fill="#f4f6fb" stroke="#8c95aa" stroke-width=".7"/>
<path d="M7.5 2.5 Q9 1.8 10 3 M10.5 2.5 Q12 1.8 13 3" fill="none" stroke="#9aa2b6" stroke-width=".6"/>
<path d="M.6 4.6 L14.4 2.6 L13.8 12.6 H3.6 Z" fill="url(#fi)"/>
<path d="M11.8 3 L14.4 2.6 L13.8 12.6 H12.4 Z" fill="#4c66be" opacity=".8"/>
</svg>
<div class="t" style="left:199.60px;top:570.50px;font-size:10px;line-height:10px;color:#2a7a2a;font-family:'Liberation Sans',sans-serif;letter-spacing:-0.283px;">ФОРУМ</div>
<div class="doth" style="left:169px;top:590.5px;width:10px"></div>
<svg class="a" style="left:178px;top:583.5px" width="16" height="14" viewBox="0 0 16 14">
<defs><linearGradient id="fi" x1="0" y1="0" x2="1" y2="1"><stop offset="0" stop-color="#a9baf2"/><stop offset=".6" stop-color="#7d97e4"/><stop offset="1" stop-color="#5574d0"/></linearGradient></defs>
<path d="M5.5 5 Q5 1.5 7.5 1 Q9 .2 10 1.3 Q11.5 .3 13 1 Q14.8 1.5 14.5 5 Z" fill="#f4f6fb" stroke="#8c95aa" stroke-width=".7"/>
<path d="M7.5 2.5 Q9 1.8 10 3 M10.5 2.5 Q12 1.8 13 3" fill="none" stroke="#9aa2b6" stroke-width=".6"/>
<path d="M.6 4.6 L14.4 2.6 L13.8 12.6 H3.6 Z" fill="url(#fi)"/>
<path d="M11.8 3 L14.4 2.6 L13.8 12.6 H12.4 Z" fill="#4c66be" opacity=".8"/>
</svg>
<div class="t" style="left:199.60px;top:585.50px;font-size:10px;line-height:10px;color:#2a7a2a;font-family:'Liberation Sans',sans-serif;letter-spacing:-0.132px;">КОНТАКТЫ</div>
<div class="dotv" style="left:169px;top:477.5px;height:113.0px"></div>
<div class="box" style="left:159px;top:617px;width:166px;height:144px"></div>
<div class="gh" style="left:159px;top:617px;width:166px"><div class="g1"></div><div class="g2"></div></div>
<div class="t" style="left:205.70px;top:622.70px;font-size:12px;line-height:12px;color:#2a2a2a;font-family:'Liberation Sans',sans-serif;letter-spacing:-0.077px;">Реклама</div>
<div class="a" style="left:303px;top:626.5px;width:0;height:0;border-left:4.5px solid transparent;border-right:4.5px solid transparent;border-bottom:5px solid #111"></div>
<div class="a" style="left:313px;top:627px;width:0;height:0;border-left:4.5px solid transparent;border-right:4.5px solid transparent;border-top:5px solid #111"></div>
<div class="a" style="left:191px;top:645px;width:102px;height:102px;background:#fff"></div>
<div class="t" style="left:192.60px;top:651.50px;font-size:11px;line-height:11px;color:#111;font-family:'Liberation Sans',sans-serif;font-weight:bold;-webkit-text-stroke:0.25px currentColor;">(</div>
<div class="t" style="left:197.90px;top:651.50px;font-size:11px;line-height:11px;color:#d08a3a;font-family:'Liberation Sans',sans-serif;font-weight:bold;-webkit-text-stroke:0.25px currentColor;letter-spacing:1.244px;">Имя</div>
<div class="t" style="left:224.30px;top:651.50px;font-size:11px;line-height:11px;color:#111;font-family:'Liberation Sans',sans-serif;font-weight:bold;-webkit-text-stroke:0.25px currentColor;">)</div>
<div class="t" style="left:235.80px;top:651.50px;font-size:11px;line-height:11px;color:#111;font-family:'Liberation Sans',sans-serif;font-weight:bold;-webkit-text-stroke:0.25px currentColor;">|</div>
<div class="t" style="left:244.60px;top:651.50px;font-size:11px;line-height:11px;color:#d08a3a;font-family:'Liberation Sans',sans-serif;font-weight:bold;-webkit-text-stroke:0.25px currentColor;letter-spacing:1.050px;">Выход</div>
<div class="t" style="left:197.90px;top:664.00px;font-size:11px;line-height:11px;color:#111;font-family:'Liberation Sans',sans-serif;font-weight:bold;-webkit-text-stroke:0.25px currentColor;letter-spacing:1.169px;">| WMR: 387.93</div>
<div class="a" style="left:192px;top:681px;width:100px;height:1px;background:#b8c890"></div>
<div class="a" style="left:192px;top:702px;width:96px;height:46px;border:1px solid #4a8a3a;border-left:none;background:#c4df9c"></div>
<div class="a" style="left:202px;top:703px;width:1px;height:45px;background:#5a9a4a"></div>
<div class="a" style="left:219px;top:703px;width:1px;height:45px;background:#5a9a4a"></div>
<div class="a" style="left:236px;top:703px;width:1px;height:45px;background:#5a9a4a"></div>
<div class="a" style="left:253px;top:703px;width:1px;height:45px;background:#5a9a4a"></div>
<div class="a" style="left:270px;top:703px;width:1px;height:45px;background:#5a9a4a"></div>
<div class="a" style="left:287px;top:703px;width:1px;height:45px;background:#5a9a4a"></div>
<div class="a" style="left:192px;top:704px;width:96px;height:1px;background:#5a9a4a"></div>
<div class="a" style="left:192px;top:721px;width:96px;height:1px;background:#5a9a4a"></div>
<div class="a" style="left:192px;top:738px;width:96px;height:1px;background:#5a9a4a"></div>
<div class="a" style="left:203px;top:705px;width:16px;height:16px;background:#5aaee6"></div>
<div class="a" style="left:206px;top:708px;width:10px;height:10px;border-radius:50%;background:#000;box-shadow:0 0 0 1px #000"></div>
<div class="a" style="left:210px;top:706px;width:2px;height:14px;background:#000"></div>
<div class="a" style="left:204px;top:712px;width:14px;height:2px;background:#000"></div>
<div class="a" style="left:254px;top:722px;width:16px;height:16px;background:#5aaee6"></div>
<div class="a" style="left:257px;top:725px;width:10px;height:10px;border-radius:50%;background:#000;box-shadow:0 0 0 1px #000"></div>
<div class="a" style="left:261px;top:723px;width:2px;height:14px;background:#000"></div>
<div class="a" style="left:255px;top:729px;width:14px;height:2px;background:#000"></div>
<div class="a" style="left:193px;top:739px;width:16px;height:16px;background:#5aaee6"></div>
<div class="a" style="left:196px;top:742px;width:10px;height:10px;border-radius:50%;background:#000;box-shadow:0 0 0 1px #000"></div>
<div class="a" style="left:200px;top:740px;width:2px;height:14px;background:#000"></div>
<div class="a" style="left:194px;top:746px;width:14px;height:2px;background:#000"></div>
<div class="t" style="left:192.00px;top:707.00px;font-size:13px;line-height:13px;color:#1a8a1a;font-family:'Liberation Sans',sans-serif;font-weight:bold;-webkit-text-stroke:0.25px currentColor;">2</div>
<div class="t" style="left:224.00px;top:707.00px;font-size:13px;line-height:13px;color:#1a1ab0;font-family:'Liberation Sans',sans-serif;font-weight:bold;-webkit-text-stroke:0.25px currentColor;">1</div>
<div class="t" style="left:241.00px;top:707.00px;font-size:13px;line-height:13px;color:#1a1ab0;font-family:'Liberation Sans',sans-serif;font-weight:bold;-webkit-text-stroke:0.25px currentColor;">1</div>
<div class="t" style="left:258.00px;top:707.00px;font-size:13px;line-height:13px;color:#1a1ab0;font-family:'Liberation Sans',sans-serif;font-weight:bold;-webkit-text-stroke:0.25px currentColor;">1</div>
<div class="t" style="left:275.00px;top:707.00px;font-size:13px;line-height:13px;color:#1a1ab0;font-family:'Liberation Sans',sans-serif;font-weight:bold;-webkit-text-stroke:0.25px currentColor;">1</div>
<div class="t" style="left:192.00px;top:724.00px;font-size:13px;line-height:13px;color:#d02a10;font-family:'Liberation Sans',sans-serif;font-weight:bold;-webkit-text-stroke:0.25px currentColor;">3</div>
<div class="t" style="left:207.00px;top:724.00px;font-size:13px;line-height:13px;color:#1a8a1a;font-family:'Liberation Sans',sans-serif;font-weight:bold;-webkit-text-stroke:0.25px currentColor;">2</div>
<div class="t" style="left:224.00px;top:724.00px;font-size:13px;line-height:13px;color:#1a1ab0;font-family:'Liberation Sans',sans-serif;font-weight:bold;-webkit-text-stroke:0.25px currentColor;">1</div>
<div class="t" style="left:241.00px;top:724.00px;font-size:13px;line-height:13px;color:#1a1ab0;font-family:'Liberation Sans',sans-serif;font-weight:bold;-webkit-text-stroke:0.25px currentColor;">1</div>
<div class="t" style="left:275.00px;top:724.00px;font-size:13px;line-height:13px;color:#1a1ab0;font-family:'Liberation Sans',sans-serif;font-weight:bold;-webkit-text-stroke:0.25px currentColor;">1</div>
<div class="t" style="left:207.00px;top:741.00px;font-size:13px;line-height:13px;color:#1a8a1a;font-family:'Liberation Sans',sans-serif;font-weight:bold;-webkit-text-stroke:0.25px currentColor;">8</div>
<div class="t" style="left:241.00px;top:741.00px;font-size:13px;line-height:13px;color:#1a1ab0;font-family:'Liberation Sans',sans-serif;font-weight:bold;-webkit-text-stroke:0.25px currentColor;">1</div>
<div class="t" style="left:258.00px;top:741.00px;font-size:13px;line-height:13px;color:#1a1ab0;font-family:'Liberation Sans',sans-serif;font-weight:bold;-webkit-text-stroke:0.25px currentColor;">1</div>
<div class="t" style="left:275.00px;top:741.00px;font-size:13px;line-height:13px;color:#1a1ab0;font-family:'Liberation Sans',sans-serif;font-weight:bold;-webkit-text-stroke:0.25px currentColor;">1</div>
<div class="a" style="left:160px;top:747px;width:164px;height:10px;background:#fff"></div>
<div class="a" style="left:191px;top:645px;width:102px;height:102px;border:1px solid #111"></div>
<div class="t" style="left:340.60px;top:124.00px;font-size:11.5px;line-height:11.5px;color:#222;font-family:'Liberation Sans',sans-serif;letter-spacing:0.604px;">Страница 11 из 282</div>
<div class="a" style="left:338px;top:137px;width:586px;height:28px;background:linear-gradient(#8b9db6 0,#8b9db6 1px,#84a4d4 2px,#9ab6e0 50%,#b7cbea 100%);border-bottom:1px solid #8f99a8"></div>
<div class="a" style="left:391px;top:138px;width:1px;height:26px;background:#98acd0"></div>
<div class="a" style="left:704px;top:138px;width:1px;height:26px;background:#98acd0"></div>
<div class="a" style="left:793px;top:138px;width:1px;height:26px;background:#98acd0"></div>
<div class="a" style="left:836px;top:138px;width:1px;height:26px;background:#98acd0"></div>
<div class="t" style="left:357.60px;top:145.00px;font-size:12px;line-height:12px;color:#ffffff;font-family:'Liberation Serif',serif;font-weight:bold;-webkit-text-stroke:0.25px currentColor;letter-spacing:0.028px;">ID</div>
<div class="t" style="left:520.00px;top:146.00px;font-size:11.5px;line-height:11.5px;color:#f4f8fc;font-family:'Liberation Sans',sans-serif;font-weight:bold;-webkit-text-stroke:0.25px currentColor;letter-spacing:0.038px;">Название</div>
<div class="t" style="left:733.30px;top:140.30px;font-size:11.5px;line-height:11.5px;color:#f4f8fc;font-family:'Liberation Sans',sans-serif;font-weight:bold;-webkit-text-stroke:0.25px currentColor;letter-spacing:0.894px;">Дата</div>
<div class="t" style="left:713.40px;top:152.50px;font-size:11.5px;line-height:11.5px;color:#f4f8fc;font-family:'Liberation Sans',sans-serif;font-weight:bold;-webkit-text-stroke:0.25px currentColor;letter-spacing:-0.085px;">выполнения</div>
<div class="t" style="left:800.70px;top:140.30px;font-size:11.5px;line-height:11.5px;color:#f4f8fc;font-family:'Liberation Sans',sans-serif;font-weight:bold;-webkit-text-stroke:0.25px currentColor;letter-spacing:0.180px;">Цена</div>
<div class="t" style="left:799.70px;top:152.50px;font-size:11.5px;line-height:11.5px;color:#f4f8fc;font-family:'Liberation Sans',sans-serif;font-weight:bold;-webkit-text-stroke:0.25px currentColor;letter-spacing:-0.156px;">(руб.)</div>
<div class="t" style="left:858.60px;top:146.40px;font-size:11.5px;line-height:11.5px;color:#f4f8fc;font-family:'Liberation Sans',sans-serif;font-weight:bold;-webkit-text-stroke:0.25px currentColor;letter-spacing:0.472px;">Статус</div>
<div class="a" style="left:339px;top:165px;width:584px;height:62px;background:#ffffff"></div>
<div class="a" style="left:338px;top:227px;width:586px;height:1px;background:#c4c4c4"></div>
<div class="a" style="left:339px;top:228px;width:584px;height:30px;background:#ececec"></div>
<div class="a" style="left:338px;top:258px;width:586px;height:1px;background:#c4c4c4"></div>
<div class="a" style="left:339px;top:259px;width:584px;height:30px;background:#ffffff"></div>
<div class="a" style="left:338px;top:289px;width:586px;height:1px;background:#c4c4c4"></div>
<div class="a" style="left:339px;top:290px;width:584px;height:62px;background:#ececec"></div>
<div class="a" style="left:338px;top:352px;width:586px;height:1px;background:#c4c4c4"></div>
<div class="a" style="left:339px;top:353px;width:584px;height:75px;background:#ffffff"></div>
<div class="a" style="left:338px;top:428px;width:586px;height:1px;background:#c4c4c4"></div>
<div class="a" style="left:339px;top:429px;width:584px;height:103px;background:#ececec"></div>
<div class="a" style="left:338px;top:532px;width:586px;height:1px;background:#c4c4c4"></div>
<div class="a" style="left:339px;top:533px;width:584px;height:62px;background:#ffffff"></div>
<div class="a" style="left:338px;top:595px;width:586px;height:1px;background:#c4c4c4"></div>
<div class="a" style="left:339px;top:596px;width:584px;height:116px;background:#ececec"></div>
<div class="a" style="left:338px;top:712px;width:586px;height:1px;background:#c4c4c4"></div>
<div class="a" style="left:339px;top:713px;width:584px;height:30px;background:#ffffff"></div>
<div class="a" style="left:338px;top:743px;width:586px;height:1px;background:#c4c4c4"></div>
<div class="a" style="left:339px;top:744px;width:584px;height:46px;background:#ececec"></div>
<div class="a" style="left:338px;top:790px;width:586px;height:1px;background:#c4c4c4"></div>
<div class="vl" style="left:338px;top:164px;height:600px"></div>
<div class="vl" style="left:391px;top:164px;height:600px"></div>
<div class="vl" style="left:704px;top:164px;height:600px"></div>
<div class="vl" style="left:793px;top:164px;height:600px"></div>
<div class="vl" style="left:836px;top:164px;height:600px"></div>
<div class="vl" style="left:923px;top:164px;height:600px"></div>
<div class="t" style="left:340.00px;top:191.00px;font-size:11.5px;line-height:11.5px;color:#1a2626;font-family:'Liberation Sans',sans-serif;font-weight:bold;letter-spacing:1.354px;text-decoration:underline;-webkit-text-stroke:0.35px #1a2626;">106431</div>
<div class="t" style="left:393.75px;top:168.00px;font-size:11.5px;line-height:11.5px;color:#222;font-family:'Liberation Sans',sans-serif;letter-spacing:0.610px;text-decoration:underline;">Всего 1 клик, оплата быстро</div>
<div class="t" style="left:393.75px;top:182.80px;font-size:11.5px;line-height:11.5px;color:#222;font-family:'Liberation Sans',sans-serif;letter-spacing:0.738px;">WMID владельца:</div>
<div class="t" style="left:505.75px;top:182.80px;font-size:11.5px;line-height:11.5px;color:#1a2a2a;font-family:'Liberation Sans',sans-serif;font-weight:bold;-webkit-text-stroke:0.25px currentColor;letter-spacing:0.521px;">146547808044</div>
<div class="t" style="left:393.75px;top:197.80px;font-size:11.5px;line-height:11.5px;color:#222;font-family:'Liberation Sans',sans-serif;letter-spacing:0.414px;">Ваш ответ:</div>
<div class="ta" style="left:475px;top:196px"><div class="sb"></div></div>
<div class="up" style="left:683px;top:202px"></div>
<div class="dn" style="left:683px;top:216px;border-top-color:#585d68"></div>
<div class="t" style="left:477.50px;top:199.00px;font-size:11px;line-height:11px;color:#333;font-family:'Liberation Sans',sans-serif;letter-spacing:0.074px;">77.239.236.183</div>
<div class="t" style="left:477.50px;top:211.80px;font-size:11px;line-height:11px;color:#333;font-family:'Liberation Sans',sans-serif;letter-spacing:0.276px;">http://www.1taxi.ru/corporativ</div>
<div class="t" style="left:716.25px;top:185.00px;font-size:11px;line-height:11px;color:#222;font-family:'Liberation Sans',sans-serif;letter-spacing:0.955px;">2010-04-11</div>
<div class="t" style="left:723.75px;top:197.80px;font-size:11px;line-height:11px;color:#222;font-family:'Liberation Sans',sans-serif;letter-spacing:1.154px;">11:45:42</div>
<div class="t" style="left:802.50px;top:190.60px;font-size:11px;line-height:11px;color:#222;font-family:'Liberation Sans',sans-serif;letter-spacing:0.645px;">0.15</div>
<div class="t" style="left:847.50px;top:190.60px;font-size:11px;line-height:11px;color:#2a8a2a;font-family:'Liberation Sans',sans-serif;letter-spacing:0.790px;">Выполнено</div>
<div class="t" style="left:340.00px;top:238.00px;font-size:11.5px;line-height:11.5px;color:#1a2626;font-family:'Liberation Sans',sans-serif;font-weight:bold;letter-spacing:1.354px;text-decoration:underline;-webkit-text-stroke:0.35px #1a2626;">106434</div>
<div class="t" style="left:393.75px;top:231.00px;font-size:11.5px;line-height:11.5px;color:#222;font-family:'Liberation Sans',sans-serif;letter-spacing:0.576px;text-decoration:underline;">LINK-RU - автооплата (vadiyan07)</div>
<div class="t" style="left:393.75px;top:245.80px;font-size:11.5px;line-height:11.5px;color:#222;font-family:'Liberation Sans',sans-serif;letter-spacing:0.738px;">WMID владельца:</div>
<div class="t" style="left:505.75px;top:245.80px;font-size:11.5px;line-height:11.5px;color:#1a2a2a;font-family:'Liberation Sans',sans-serif;font-weight:bold;-webkit-text-stroke:0.25px currentColor;letter-spacing:0.521px;">822390017776</div>
<div class="t" style="left:716.25px;top:232.00px;font-size:11px;line-height:11px;color:#222;font-family:'Liberation Sans',sans-serif;letter-spacing:0.955px;">2010-04-11</div>
<div class="t" style="left:723.75px;top:244.80px;font-size:11px;line-height:11px;color:#222;font-family:'Liberation Sans',sans-serif;letter-spacing:1.154px;">11:44:26</div>
<div class="t" style="left:802.50px;top:237.60px;font-size:11px;line-height:11px;color:#222;font-family:'Liberation Sans',sans-serif;letter-spacing:0.645px;">0.15</div>
<div class="t" style="left:847.50px;top:237.60px;font-size:11px;line-height:11px;color:#2a8a2a;font-family:'Liberation Sans',sans-serif;letter-spacing:0.790px;">Выполнено</div>
<div class="t" style="left:340.00px;top:269.00px;font-size:11.5px;line-height:11.5px;color:#1a2626;font-family:'Liberation Sans',sans-serif;font-weight:bold;letter-spacing:1.354px;text-decoration:underline;-webkit-text-stroke:0.35px #1a2626;">106326</div>
<div class="t" style="left:393.75px;top:262.00px;font-size:11.5px;line-height:11.5px;color:#222;font-family:'Liberation Sans',sans-serif;letter-spacing:0.711px;text-decoration:underline;">Пока друзья. До встречи. Наверно она еще будет.</div>
<div class="t" style="left:393.75px;top:276.80px;font-size:11.5px;line-height:11.5px;color:#222;font-family:'Liberation Sans',sans-serif;letter-spacing:0.738px;">WMID владельца:</div>
<div class="t" style="left:505.75px;top:276.80px;font-size:11.5px;line-height:11.5px;color:#1a2a2a;font-family:'Liberation Sans',sans-serif;font-weight:bold;-webkit-text-stroke:0.25px currentColor;letter-spacing:0.521px;">173841000125</div>
<div class="t" style="left:716.25px;top:263.00px;font-size:11px;line-height:11px;color:#222;font-family:'Liberation Sans',sans-serif;letter-spacing:0.955px;">2010-04-11</div>
<div class="t" style="left:723.75px;top:275.80px;font-size:11px;line-height:11px;color:#222;font-family:'Liberation Sans',sans-serif;letter-spacing:1.154px;">11:15:56</div>
<div class="t" style="left:802.50px;top:268.60px;font-size:11px;line-height:11px;color:#222;font-family:'Liberation Sans',sans-serif;letter-spacing:0.645px;">0.15</div>
<div class="t" style="left:847.50px;top:268.60px;font-size:11px;line-height:11px;color:#2a8a2a;font-family:'Liberation Sans',sans-serif;letter-spacing:0.790px;">Выполнено</div>
<div class="t" style="left:340.00px;top:316.00px;font-size:11.5px;line-height:11.5px;color:#1a2626;font-family:'Liberation Sans',sans-serif;font-weight:bold;letter-spacing:1.354px;text-decoration:underline;-webkit-text-stroke:0.35px #1a2626;">106420</div>
<div class="t" style="left:393.75px;top:293.00px;font-size:11.5px;line-height:11.5px;color:#222;font-family:'Liberation Sans',sans-serif;letter-spacing:0.591px;text-decoration:underline;">Скачать 3-4мб</div>
<div class="t" style="left:393.75px;top:307.80px;font-size:11.5px;line-height:11.5px;color:#222;font-family:'Liberation Sans',sans-serif;letter-spacing:0.738px;">WMID владельца:</div>
<div class="t" style="left:505.75px;top:307.80px;font-size:11.5px;line-height:11.5px;color:#1a2a2a;font-family:'Liberation Sans',sans-serif;font-weight:bold;-webkit-text-stroke:0.25px currentColor;letter-spacing:0.521px;">803836340077</div>
<div class="t" style="left:393.75px;top:322.80px;font-size:11.5px;line-height:11.5px;color:#222;font-family:'Liberation Sans',sans-serif;letter-spacing:0.414px;">Ваш ответ:</div>
<div class="ta" style="left:475px;top:321px"><div class="sb"></div></div>
<div class="up" style="left:683px;top:327px"></div>
<div class="dn" style="left:683px;top:341px;border-top-color:#c4c4c4"></div>
<div class="t" style="left:477.50px;top:324.00px;font-size:11px;line-height:11px;color:#333;font-family:'Liberation Sans',sans-serif;letter-spacing:0.074px;">77.239.236.183</div>
<div class="t" style="left:477.50px;top:336.80px;font-size:11px;line-height:11px;color:#333;font-family:'Liberation Sans',sans-serif;letter-spacing:0.234px;">11-09</div>
<div class="t" style="left:716.25px;top:310.00px;font-size:11px;line-height:11px;color:#222;font-family:'Liberation Sans',sans-serif;letter-spacing:0.955px;">2010-04-11</div>
<div class="t" style="left:723.75px;top:322.80px;font-size:11px;line-height:11px;color:#222;font-family:'Liberation Sans',sans-serif;letter-spacing:1.154px;">11:12:27</div>
<div class="t" style="left:802.50px;top:315.60px;font-size:11px;line-height:11px;color:#222;font-family:'Liberation Sans',sans-serif;letter-spacing:0.645px;">0.15</div>
<div class="t" style="left:847.50px;top:315.60px;font-size:11px;line-height:11px;color:#2a8a2a;font-family:'Liberation Sans',sans-serif;letter-spacing:0.790px;">Выполнено</div>
<div class="t" style="left:340.00px;top:385.50px;font-size:11.5px;line-height:11.5px;color:#1a2626;font-family:'Liberation Sans',sans-serif;font-weight:bold;letter-spacing:1.354px;text-decoration:underline;-webkit-text-stroke:0.35px #1a2626;">104191</div>
<div class="t" style="left:393.75px;top:356.00px;font-size:11.5px;line-height:11.5px;color:#222;font-family:'Liberation Sans',sans-serif;letter-spacing:0.492px;text-decoration:underline;">--&gt;NeoBux - РЕФБЭК КАЖДЫЙ ДЕНЬ ПО 0,30 за 4</div>
<div class="t" style="left:393.75px;top:369.80px;font-size:11.5px;line-height:11.5px;color:#222;font-family:'Liberation Sans',sans-serif;letter-spacing:0.753px;text-decoration:underline;">клика</div>
<div class="t" style="left:393.75px;top:384.60px;font-size:11.5px;line-height:11.5px;color:#222;font-family:'Liberation Sans',sans-serif;letter-spacing:0.738px;">WMID владельца:</div>
<div class="t" style="left:505.75px;top:384.60px;font-size:11.5px;line-height:11.5px;color:#1a2a2a;font-family:'Liberation Sans',sans-serif;font-weight:bold;-webkit-text-stroke:0.25px currentColor;letter-spacing:0.521px;">167612824772</div>
<div class="t" style="left:393.75px;top:399.60px;font-size:11.5px;line-height:11.5px;color:#222;font-family:'Liberation Sans',sans-serif;letter-spacing:0.414px;">Ваш ответ:</div>
<div class="ta" style="left:475px;top:398px"><div class="sb"></div></div>
<div class="up" style="left:683px;top:404px"></div>
<div class="dn" style="left:683px;top:418px;border-top-color:#c4c4c4"></div>
<div class="t" style="left:477.50px;top:401.00px;font-size:11px;line-height:11px;color:#333;font-family:'Liberation Sans',sans-serif;letter-spacing:-0.172px;">Saratov1991</div>
<div class="t" style="left:716.25px;top:379.50px;font-size:11px;line-height:11px;color:#222;font-family:'Liberation Sans',sans-serif;letter-spacing:0.955px;">2010-04-11</div>
<div class="t" style="left:723.75px;top:392.30px;font-size:11px;line-height:11px;color:#222;font-family:'Liberation Sans',sans-serif;letter-spacing:1.154px;">11:04:34</div>
<div class="t" style="left:802.50px;top:385.10px;font-size:11px;line-height:11px;color:#222;font-family:'Liberation Sans',sans-serif;letter-spacing:0.645px;">0.30</div>
<div class="t" style="left:847.50px;top:385.10px;font-size:11px;line-height:11px;color:#2a8a2a;font-family:'Liberation Sans',sans-serif;letter-spacing:0.790px;">Выполнено</div>
<div class="t" style="left:344.00px;top:475.50px;font-size:11.5px;line-height:11.5px;color:#1a2626;font-family:'Liberation Sans',sans-serif;font-weight:bold;letter-spacing:1.363px;text-decoration:underline;-webkit-text-stroke:0.35px #1a2626;">91412</div>
<div class="t" style="left:393.75px;top:432.00px;font-size:11.5px;line-height:11.5px;color:#222;font-family:'Liberation Sans',sans-serif;letter-spacing:0.747px;text-decoration:underline;">Один клик по таку (постоянное!)</div>
<div class="t" style="left:393.75px;top:446.80px;font-size:11.5px;line-height:11.5px;color:#222;font-family:'Liberation Sans',sans-serif;letter-spacing:0.738px;">WMID владельца:</div>
<div class="t" style="left:505.75px;top:446.80px;font-size:11.5px;line-height:11.5px;color:#1a2a2a;font-family:'Liberation Sans',sans-serif;font-weight:bold;-webkit-text-stroke:0.25px currentColor;letter-spacing:0.521px;">193153838444</div>
<div class="t" style="left:393.75px;top:461.80px;font-size:11.5px;line-height:11.5px;color:#222;font-family:'Liberation Sans',sans-serif;letter-spacing:0.414px;">Ваш ответ:</div>
<div class="ta" style="left:475px;top:460px"><div class="sb"></div></div>
<div class="up" style="left:683px;top:466px"></div>
<div class="dn" style="left:683px;top:480px;border-top-color:#c4c4c4"></div>
<div class="t" style="left:477.50px;top:463.00px;font-size:11px;line-height:11px;color:#333;font-family:'Liberation Sans',sans-serif;letter-spacing:0.074px;">77.239.236.183</div>
<div class="t" style="left:393.75px;top:493.50px;font-size:11.5px;line-height:11.5px;color:#222;font-family:'Liberation Sans',sans-serif;letter-spacing:0.233px;">Комментарий</div>
<div class="t" style="left:393.75px;top:506.00px;font-size:11.5px;line-height:11.5px;color:#222;font-family:'Liberation Sans',sans-serif;letter-spacing:0.708px;">владельца</div>
<div class="t" style="left:393.75px;top:518.50px;font-size:11.5px;line-height:11.5px;color:#222;font-family:'Liberation Sans',sans-serif;letter-spacing:0.689px;">задания:</div>
<div class="ta" style="left:475px;top:496px"><div class="sb"></div></div>
<div class="up" style="left:683px;top:502px"></div>
<div class="dn" style="left:683px;top:516px;border-top-color:#c4c4c4"></div>
<div class="t" style="left:477.50px;top:499.00px;font-size:11px;line-height:11px;color:#333;font-family:'Liberation Sans',sans-serif;letter-spacing:-0.330px;">Спасибо!</div>
<div class="t" style="left:477.50px;top:511.80px;font-size:11px;line-height:11px;color:#333;font-family:'Liberation Sans',sans-serif;letter-spacing:0.006px;">приходите ещё</div>
<div class="t" style="left:716.25px;top:469.50px;font-size:11px;line-height:11px;color:#222;font-family:'Liberation Sans',sans-serif;letter-spacing:0.955px;">2010-04-11</div>
<div class="t" style="left:723.75px;top:482.30px;font-size:11px;line-height:11px;color:#222;font-family:'Liberation Sans',sans-serif;letter-spacing:1.154px;">10:56:11</div>
<div class="t" style="left:802.50px;top:475.10px;font-size:11px;line-height:11px;color:#222;font-family:'Liberation Sans',sans-serif;letter-spacing:0.645px;">0.17</div>
<div class="t" style="left:847.50px;top:475.10px;font-size:11px;line-height:11px;color:#2a8a2a;font-family:'Liberation Sans',sans-serif;letter-spacing:0.790px;">Выполнено</div>
<div class="t" style="left:340.00px;top:559.00px;font-size:11.5px;line-height:11.5px;color:#1a2626;font-family:'Liberation Sans',sans-serif;font-weight:bold;letter-spacing:1.354px;text-decoration:underline;-webkit-text-stroke:0.35px #1a2626;">101220</div>
<div class="t" style="left:393.75px;top:536.00px;font-size:11.5px;line-height:11.5px;color:#222;font-family:'Liberation Sans',sans-serif;letter-spacing:0.616px;text-decoration:underline;">1 КЛИК. В избранное!!!</div>
<div class="t" style="left:393.75px;top:550.80px;font-size:11.5px;line-height:11.5px;color:#222;font-family:'Liberation Sans',sans-serif;letter-spacing:0.738px;">WMID владельца:</div>
<div class="t" style="left:505.75px;top:550.80px;font-size:11.5px;line-height:11.5px;color:#1a2a2a;font-family:'Liberation Sans',sans-serif;font-weight:bold;-webkit-text-stroke:0.25px currentColor;letter-spacing:0.573px;">115368676762</div>
<div class="t" style="left:393.75px;top:565.80px;font-size:11.5px;line-height:11.5px;color:#222;font-family:'Liberation Sans',sans-serif;letter-spacing:0.414px;">Ваш ответ:</div>
<div class="ta" style="left:475px;top:564px"><div class="sb"></div></div>
<div class="up" style="left:683px;top:570px"></div>
<div class="dn" style="left:683px;top:584px;border-top-color:#585d68"></div>
<div class="t" style="left:477.50px;top:567.00px;font-size:11px;line-height:11px;color:#333;font-family:'Liberation Sans',sans-serif;letter-spacing:0.074px;">77.239.236.183</div>
<div class="t" style="left:477.50px;top:579.80px;font-size:11px;line-height:11px;color:#333;font-family:'Liberation Sans',sans-serif;letter-spacing:0.120px;">http://stroims.ucoz.ru/dir</div>
<div class="t" style="left:716.25px;top:553.00px;font-size:11px;line-height:11px;color:#222;font-family:'Liberation Sans',sans-serif;letter-spacing:0.955px;">2010-04-11</div>
<div class="t" style="left:723.75px;top:565.80px;font-size:11px;line-height:11px;color:#222;font-family:'Liberation Sans',sans-serif;letter-spacing:1.053px;">10:55:00</div>
<div class="t" style="left:802.50px;top:558.60px;font-size:11px;line-height:11px;color:#222;font-family:'Liberation Sans',sans-serif;letter-spacing:0.645px;">0.15</div>
<div class="t" style="left:847.50px;top:558.60px;font-size:11px;line-height:11px;color:#2a8a2a;font-family:'Liberation Sans',sans-serif;letter-spacing:0.790px;">Выполнено</div>
<div class="t" style="left:344.00px;top:649.00px;font-size:11.5px;line-height:11.5px;color:#1a2626;font-family:'Liberation Sans',sans-serif;font-weight:bold;letter-spacing:1.363px;text-decoration:underline;-webkit-text-stroke:0.35px #1a2626;">97723</div>
<div class="t" style="left:393.75px;top:599.00px;font-size:11.5px;line-height:11.5px;color:#222;font-family:'Liberation Sans',sans-serif;letter-spacing:0.802px;text-decoration:underline;">===== !!!!!1 КЛИК = 15 КОПЕЕК БЫСТРО!!!!</div>
<div class="t" style="left:393.75px;top:612.80px;font-size:11.5px;line-height:11.5px;color:#222;font-family:'Liberation Sans',sans-serif;letter-spacing:1.981px;text-decoration:underline;">=====</div>
<div class="t" style="left:393.75px;top:627.60px;font-size:11.5px;line-height:11.5px;color:#222;font-family:'Liberation Sans',sans-serif;letter-spacing:0.738px;">WMID владельца:</div>
<div class="t" style="left:505.75px;top:627.60px;font-size:11.5px;line-height:11.5px;color:#1a2a2a;font-family:'Liberation Sans',sans-serif;font-weight:bold;-webkit-text-stroke:0.25px currentColor;letter-spacing:0.521px;">868495939666</div>
<div class="t" style="left:393.75px;top:642.60px;font-size:11.5px;line-height:11.5px;color:#222;font-family:'Liberation Sans',sans-serif;letter-spacing:0.414px;">Ваш ответ:</div>
<div class="ta" style="left:475px;top:641px"><div class="sb"></div></div>
<div class="up" style="left:683px;top:647px"></div>
<div class="dn" style="left:683px;top:661px;border-top-color:#c4c4c4"></div>
<div class="t" style="left:477.50px;top:644.00px;font-size:11px;line-height:11px;color:#333;font-family:'Liberation Sans',sans-serif;letter-spacing:0.074px;">77.239.236.183</div>
<div class="t" style="left:477.50px;top:656.80px;font-size:11px;line-height:11px;color:#333;font-family:'Liberation Sans',sans-serif;letter-spacing:0.485px;">http://www.bfx.ru/</div>
<div class="t" style="left:393.75px;top:674.50px;font-size:11.5px;line-height:11.5px;color:#222;font-family:'Liberation Sans',sans-serif;letter-spacing:0.233px;">Комментарий</div>
<div class="t" style="left:393.75px;top:687.00px;font-size:11.5px;line-height:11.5px;color:#222;font-family:'Liberation Sans',sans-serif;letter-spacing:0.708px;">владельца</div>
<div class="t" style="left:393.75px;top:699.50px;font-size:11.5px;line-height:11.5px;color:#222;font-family:'Liberation Sans',sans-serif;letter-spacing:0.689px;">задания:</div>
<div class="ta" style="left:475px;top:677px"><div class="sb"></div></div>
<div class="up" style="left:683px;top:683px"></div>
<div class="dn" style="left:683px;top:697px;border-top-color:#c4c4c4"></div>
<div class="t" style="left:477.50px;top:680.00px;font-size:11px;line-height:11px;color:#333;font-family:'Liberation Sans',sans-serif;letter-spacing:-0.330px;">Спасибо!</div>
<div class="t" style="left:716.25px;top:643.00px;font-size:11px;line-height:11px;color:#222;font-family:'Liberation Sans',sans-serif;letter-spacing:0.955px;">2010-04-11</div>
<div class="t" style="left:723.75px;top:655.80px;font-size:11px;line-height:11px;color:#222;font-family:'Liberation Sans',sans-serif;letter-spacing:1.053px;">10:53:36</div>
<div class="t" style="left:802.50px;top:648.60px;font-size:11px;line-height:11px;color:#222;font-family:'Liberation Sans',sans-serif;letter-spacing:0.645px;">0.15</div>
<div class="t" style="left:847.50px;top:648.60px;font-size:11px;line-height:11px;color:#2a8a2a;font-family:'Liberation Sans',sans-serif;letter-spacing:0.790px;">Выполнено</div>
<div class="t" style="left:340.00px;top:723.00px;font-size:11.5px;line-height:11.5px;color:#1a2626;font-family:'Liberation Sans',sans-serif;font-weight:bold;letter-spacing:1.354px;text-decoration:underline;-webkit-text-stroke:0.35px #1a2626;">101079</div>
<div class="t" style="left:393.75px;top:716.00px;font-size:11.5px;line-height:11.5px;color:#222;font-family:'Liberation Sans',sans-serif;letter-spacing:0.595px;text-decoration:underline;">Скачать файл letitbit</div>
<div class="t" style="left:393.75px;top:730.80px;font-size:11.5px;line-height:11.5px;color:#222;font-family:'Liberation Sans',sans-serif;letter-spacing:0.738px;">WMID владельца:</div>
<div class="t" style="left:505.75px;top:730.80px;font-size:11.5px;line-height:11.5px;color:#1a2a2a;font-family:'Liberation Sans',sans-serif;font-weight:bold;-webkit-text-stroke:0.25px currentColor;letter-spacing:0.521px;">103491395466</div>
<div class="t" style="left:716.25px;top:717.00px;font-size:11px;line-height:11px;color:#222;font-family:'Liberation Sans',sans-serif;letter-spacing:0.955px;">2010-04-11</div>
<div class="t" style="left:723.75px;top:729.80px;font-size:11px;line-height:11px;color:#222;font-family:'Liberation Sans',sans-serif;letter-spacing:1.053px;">10:50:36</div>
<div class="t" style="left:802.50px;top:722.60px;font-size:11px;line-height:11px;color:#222;font-family:'Liberation Sans',sans-serif;letter-spacing:0.645px;">0.15</div>
<div class="t" style="left:847.50px;top:722.60px;font-size:11px;line-height:11px;color:#2a8a2a;font-family:'Liberation Sans',sans-serif;letter-spacing:0.790px;">Выполнено</div>
<div class="t" style="left:393.75px;top:747.00px;font-size:11.5px;line-height:11.5px;color:#222;font-family:'Liberation Sans',sans-serif;letter-spacing:0.882px;text-decoration:underline;">1 клик быстро</div>
<div class="t" style="left:716.25px;top:756.00px;font-size:11px;line-height:11px;color:#222;font-family:'Liberation Sans',sans-serif;letter-spacing:0.955px;">2010-04-11</div>
<div class="t" style="left:723.75px;top:768.80px;font-size:11px;line-height:11px;color:#222;font-family:'Liberation Sans',sans-serif;letter-spacing:1.154px;">10:49:11</div>
<div class="t" style="left:802.50px;top:761.60px;font-size:11px;line-height:11px;color:#222;font-family:'Liberation Sans',sans-serif;letter-spacing:0.645px;">0.15</div>
<div class="t" style="left:847.50px;top:761.60px;font-size:11px;line-height:11px;color:#2a8a2a;font-family:'Liberation Sans',sans-serif;letter-spacing:0.790px;">Выполнено</div>
<div class="box" style="left:937px;top:100px;width:166px;height:134px;border-top:none"></div>
<div class="a" style="left:945px;top:100px;width:82px;height:68px;border:1px solid #111;background:#fff;overflow:hidden"></div>
<svg class="a" style="left:946px;top:88px" width="80" height="79" viewBox="0 0 80 79">
<defs><linearGradient id="sm" x1="0" y1="0" x2="0" y2="1"><stop offset="0" stop-color="#fff060"/><stop offset=".4" stop-color="#f6dc22"/><stop offset=".75" stop-color="#f0b420"/><stop offset=".93" stop-color="#f4c870"/><stop offset="1" stop-color="#d8a040"/></linearGradient>
<radialGradient id="smh" cx="50%" cy="45%" r="40%"><stop offset="0" stop-color="#fff8a0" stop-opacity=".7"/><stop offset="1" stop-color="#fff8a0" stop-opacity="0"/></radialGradient></defs>
<circle cx="41" cy="39" r="38.5" fill="url(#sm)" stroke="#c8901a" stroke-width="1.2"/>
<ellipse cx="41" cy="40" rx="26" ry="9" fill="url(#smh)"/>
<path d="M9 36 Q14 33 18 36 M64 36 Q68 33 73 36" fill="none" stroke="#d89a30" stroke-width="1.2"/>
<path d="M10.5 38 Q41 70 71.5 38" fill="none" stroke="#8a5a08" stroke-width="1.7"/>
<path d="M20 30 Q41 26 62 30" fill="none" stroke="#c8a020" stroke-width=".8" opacity=".6"/>
<path d="M22 24 L28 36 L38 34 L40 24 Z" fill="#2c3c84"/><path d="M44 24 L46 34 L56 36 L62 24 Z" fill="#2c3c84"/>
<path d="M27 26 L33 34 M51 34 L57 26" stroke="#f0f4ff" stroke-width="2"/>
</svg>
<div class="t" style="left:1030.60px;top:109.70px;font-size:12px;line-height:12px;color:#222;font-family:'Liberation Sans',sans-serif;letter-spacing:0.183px;">2832.2</div>
<svg class="a" style="left:943px;top:173px" width="17" height="54" viewBox="0 0 17 54">
<path d="M8 1.5 L14 4 V10 Q14 14 8 16 Q2 14 2 10 V4 Z" fill="#f4f6fa" stroke="#8a8e96" stroke-width="1.1"/>
<path d="M1.5 26 L11 20 L15.5 27 L6 33 Z" fill="#7ac87a" stroke="#4a9a4a" stroke-width=".8"/><circle cx="8.5" cy="26.5" r="2" fill="#c8eac8"/>
<ellipse cx="8.5" cy="46" rx="8" ry="5" fill="#f6e8e0" stroke="#d8b8a8"/><circle cx="8.5" cy="46" r="3.6" fill="#4a7ad8"/><circle cx="8.5" cy="46" r="1.5" fill="#1a2a6a"/>
</svg>
<div class="t" style="left:963.30px;top:174.60px;font-size:12px;line-height:12px;color:#1a3636;font-family:'Liberation Sans',sans-serif;font-weight:bold;-webkit-text-stroke:0.25px currentColor;letter-spacing:0.814px;">Standart</div>
<svg class="a" style="left:960px;top:186px" width="134" height="44" viewBox="0 0 134 44" shape-rendering="crispEdges">
<polygon points="24,3 40,1 63,3 80,10 87,16 85,21 75,26 100,28 115,28 129,32 128,37 100,40 40,39 4,39 3,28 6,24 1,19 1,11 12,9 24,6" fill="#000"/>
<path d="M113 27h1v1h-1zM107 40h1v1h-1zM83 41h1v1h-1zM53 40h1v1h-1zM125 38h1v1h-1zM29 40h1v1h-1zM44 40h1v1h-1zM86 25h1v1h-1zM77 40h1v1h-1zM13 8h1v1h-1zM121 39h1v1h-1zM2 26h1v1h-1zM85 13h1v1h-1zM81 9h1v1h-1zM65 39h1v1h-1zM87 41h1v1h-1zM0 15h1v1h-1zM32 39h1v1h-1zM84 41h1v1h-1zM38 0h1v1h-1zM119 39h1v1h-1zM88 26h1v1h-1z" fill="#000"/>
<path d="M17 15h1v1h-1zM12 14h1v1h-1zM48 23h1v1h-1zM16 36h1v1h-1zM42 21h1v1h-1zM29 31h1v1h-1zM38 5h1v1h-1zM59 14h1v1h-1zM15 12h1v1h-1zM53 28h1v1h-1zM87 38h1v1h-1zM38 34h1v1h-1zM93 39h1v1h-1zM21 9h1v1h-1zM21 10h1v1h-1zM49 13h1v1h-1zM107 32h1v1h-1zM30 35h1v1h-1zM14 15h1v1h-1zM51 28h1v1h-1zM23 23h1v1h-1zM58 6h1v1h-1zM22 17h1v1h-1zM22 16h1v1h-1zM31 29h1v1h-1zM4 16h1v1h-1zM65 27h1v1h-1zM82 15h1v1h-1zM67 5h1v1h-1zM10 25h1v1h-1zM83 31h1v1h-1zM109 32h1v1h-1zM58 5h1v1h-1zM23 33h1v1h-1zM3 30h1v1h-1zM30 35h1v1h-1zM21 30h1v1h-1zM6 10h1v1h-1zM73 31h1v1h-1zM49 15h1v1h-1zM87 35h1v1h-1zM28 6h1v1h-1zM74 32h1v1h-1zM14 38h1v1h-1zM36 26h1v1h-1zM20 17h1v1h-1zM79 27h1v1h-1zM15 16h1v1h-1zM33 31h1v1h-1zM20 32h1v1h-1zM72 37h1v1h-1zM101 35h1v1h-1zM13 35h1v1h-1zM94 32h1v1h-1zM41 33h1v1h-1zM50 19h1v1h-1zM9 20h1v1h-1zM45 1h1v1h-1zM27 4h1v1h-1zM80 32h1v1h-1zM28 12h1v1h-1zM42 14h1v1h-1zM70 29h1v1h-1zM9 12h1v1h-1zM43 16h1v1h-1zM8 14h1v1h-1zM6 25h1v1h-1zM111 29h1v1h-1zM37 2h1v1h-1zM16 24h1v1h-1zM52 13h1v1h-1zM73 30h1v1h-1zM89 31h1v1h-1zM59 31h1v1h-1zM59 29h1v1h-1zM60 32h1v1h-1zM77 39h1v1h-1zM66 6h1v1h-1zM99 29h1v1h-1zM75 29h1v1h-1zM121 32h1v1h-1zM21 23h1v1h-1zM77 24h1v1h-1zM64 38h1v1h-1zM36 14h1v1h-1zM54 33h1v1h-1zM32 21h1v1h-1zM81 19h1v1h-1zM96 39h1v1h-1zM21 13h1v1h-1zM66 19h1v1h-1zM8 20h1v1h-1zM103 28h1v1h-1zM33 30h1v1h-1zM38 15h1v1h-1zM71 27h1v1h-1zM46 24h1v1h-1zM56 11h1v1h-1zM65 22h1v1h-1zM65 24h1v1h-1zM66 31h1v1h-1zM116 30h1v1h-1zM87 32h1v1h-1zM58 11h1v1h-1zM44 13h1v1h-1zM68 15h1v1h-1zM114 33h1v1h-1zM46 10h1v1h-1zM71 7h1v1h-1zM58 14h1v1h-1zM27 33h1v1h-1zM5 14h1v1h-1zM25 16h1v1h-1zM10 18h1v1h-1zM42 7h1v1h-1zM37 28h1v1h-1zM70 33h1v1h-1zM79 32h1v1h-1zM10 26h1v1h-1zM25 37h1v1h-1zM7 12h1v1h-1zM36 36h1v1h-1zM31 9h1v1h-1zM16 22h1v1h-1zM11 28h1v1h-1zM62 5h1v1h-1zM62 24h1v1h-1zM61 8h1v1h-1zM37 19h1v1h-1zM59 20h1v1h-1zM33 17h1v1h-1zM10 25h1v1h-1zM41 27h1v1h-1zM115 32h1v1h-1zM60 15h1v1h-1zM71 19h1v1h-1zM43 35h1v1h-1zM62 5h1v1h-1zM75 23h1v1h-1zM58 23h1v1h-1zM61 3h1v1h-1zM55 23h1v1h-1zM36 18h1v1h-1zM89 36h1v1h-1zM100 34h1v1h-1zM51 36h1v1h-1zM2 16h1v1h-1zM91 31h1v1h-1zM5 31h1v1h-1zM66 11h1v1h-1zM68 28h1v1h-1zM11 13h1v1h-1zM39 13h1v1h-1zM34 7h1v1h-1zM67 17h1v1h-1zM50 7h1v1h-1zM116 36h1v1h-1zM64 24h1v1h-1zM67 28h1v1h-1zM102 34h1v1h-1zM99 29h1v1h-1zM106 37h1v1h-1zM52 3h1v1h-1zM31 3h1v1h-1zM52 33h1v1h-1zM34 2h1v1h-1zM9 22h1v1h-1zM22 12h1v1h-1zM38 19h1v1h-1zM23 21h1v1h-1zM38 16h1v1h-1zM61 7h1v1h-1zM53 14h1v1h-1zM15 15h1v1h-1zM35 13h1v1h-1zM89 37h1v1h-1zM126 31h1v1h-1zM119 37h1v1h-1zM38 23h1v1h-1zM64 26h1v1h-1zM1 17h1v1h-1zM40 20h1v1h-1zM16 26h1v1h-1zM61 32h1v1h-1zM20 23h1v1h-1zM83 13h1v1h-1zM84 16h1v1h-1zM122 36h1v1h-1zM87 39h1v1h-1zM72 12h1v1h-1zM41 27h1v1h-1zM13 30h1v1h-1zM9 15h1v1h-1zM9 29h1v1h-1zM24 11h1v1h-1zM41 6h1v1h-1zM31 29h1v1h-1zM17 38h1v1h-1zM17 34h1v1h-1zM36 35h1v1h-1zM82 13h1v1h-1zM71 39h1v1h-1zM67 11h1v1h-1zM60 18h1v1h-1zM112 31h1v1h-1zM23 25h1v1h-1zM30 12h1v1h-1zM86 35h1v1h-1zM61 33h1v1h-1zM80 13h1v1h-1zM46 32h1v1h-1zM46 14h1v1h-1zM80 37h1v1h-1zM16 25h1v1h-1zM57 20h1v1h-1zM70 26h1v1h-1zM35 33h1v1h-1zM68 26h1v1h-1zM4 18h1v1h-1zM49 27h1v1h-1zM59 27h1v1h-1zM68 7h1v1h-1zM116 37h1v1h-1zM67 15h1v1h-1zM66 21h1v1h-1zM21 16h1v1h-1zM13 16h1v1h-1zM16 37h1v1h-1zM79 16h1v1h-1zM62 29h1v1h-1zM71 8h1v1h-1zM18 20h1v1h-1zM82 20h1v1h-1zM65 38h1v1h-1zM42 11h1v1h-1zM108 32h1v1h-1zM81 29h1v1h-1zM46 18h1v1h-1zM73 31h1v1h-1zM45 38h1v1h-1zM41 7h1v1h-1zM27 11h1v1h-1zM6 11h1v1h-1zM66 32h1v1h-1zM15 14h1v1h-1zM50 16h1v1h-1zM44 23h1v1h-1zM62 37h1v1h-1zM12 27h1v1h-1zM69 32h1v1h-1zM36 10h1v1h-1zM11 31h1v1h-1zM61 29h1v1h-1zM57 25h1v1h-1zM39 5h1v1h-1zM68 22h1v1h-1zM29 24h1v1h-1zM71 32h1v1h-1zM69 35h1v1h-1zM47 31h1v1h-1zM95 32h1v1h-1zM82 21h1v1h-1zM48 13h1v1h-1zM59 18h1v1h-1zM3 14h1v1h-1zM47 23h1v1h-1zM29 21h1v1h-1zM50 34h1v1h-1zM81 36h1v1h-1zM58 28h1v1h-1zM86 38h1v1h-1zM30 3h1v1h-1zM48 6h1v1h-1zM71 9h1v1h-1zM58 36h1v1h-1zM40 19h1v1h-1zM62 26h1v1h-1zM79 26h1v1h-1zM59 21h1v1h-1zM41 7h1v1h-1zM17 19h1v1h-1zM70 23h1v1h-1zM43 27h1v1h-1zM69 15h1v1h-1zM4 26h1v1h-1zM32 30h1v1h-1zM25 27h1v1h-1zM58 23h1v1h-1zM32 35h1v1h-1zM45 10h1v1h-1zM26 33h1v1h-1zM73 19h1v1h-1zM97 29h1v1h-1zM124 35h1v1h-1zM41 12h1v1h-1zM32 13h1v1h-1zM44 3h1v1h-1zM39 28h1v1h-1zM73 23h1v1h-1zM69 31h1v1h-1zM39 24h1v1h-1z" fill="#fff"/>
</svg>
<div class="box" style="left:937px;top:249px;width:166px;height:253px"></div>
<div class="gh" style="left:937px;top:249px;width:166px"><div class="g1"></div><div class="g2"></div></div>
<div class="t" style="left:963.80px;top:255.00px;font-size:12px;line-height:12px;color:#2a2a2a;font-family:'Liberation Sans',sans-serif;letter-spacing:0.375px;">Сейчас обсуждают</div>
<div class="a" style="left:1081px;top:258.5px;width:0;height:0;border-left:4.5px solid transparent;border-right:4.5px solid transparent;border-bottom:5px solid #111"></div>
<div class="a" style="left:1091px;top:259px;width:0;height:0;border-left:4.5px solid transparent;border-right:4.5px solid transparent;border-top:5px solid #111"></div>
<svg class="a" style="left:943px;top:281.0px" width="10" height="7"><path d="M0.5 2.5 H5 V0.5 L9.5 3.5 L5 6.5 V4.5 H0.5 Z" fill="#d8d070"/></svg>
<div class="t" style="left:956.40px;top:279.00px;font-size:11px;line-height:11px;color:#2a7a2a;font-family:'Liberation Sans',sans-serif;letter-spacing:-0.282px;">Правила форума</div>
<div class="t" style="left:1040.40px;top:279.00px;font-size:11px;line-height:11px;color:#222;font-family:'Liberation Sans',sans-serif;letter-spacing:1.216px;">(0)</div>
<svg class="a" style="left:943px;top:294.8px" width="10" height="7"><path d="M0.5 2.5 H5 V0.5 L9.5 3.5 L5 6.5 V4.5 H0.5 Z" fill="#d8d070"/></svg>
<div class="t" style="left:956.40px;top:292.80px;font-size:11px;line-height:11px;color:#2a7a2a;font-family:'Liberation Sans',sans-serif;letter-spacing:0.093px;">Вопрос ответ vol.5</div>
<div class="t" style="left:1052.00px;top:292.80px;font-size:11px;line-height:11px;color:#222;font-family:'Liberation Sans',sans-serif;letter-spacing:0.867px;">(1908)</div>
<svg class="a" style="left:943px;top:308.8px" width="10" height="7"><path d="M0.5 2.5 H5 V0.5 L9.5 3.5 L5 6.5 V4.5 H0.5 Z" fill="#b4b4b4"/></svg>
<div class="t" style="left:956.40px;top:306.75px;font-size:11px;line-height:11px;color:#2a7a2a;font-family:'Liberation Sans',sans-serif;letter-spacing:0.171px;">Обновление от 11....</div>
<div class="t" style="left:1064.00px;top:306.75px;font-size:11px;line-height:11px;color:#222;font-family:'Liberation Sans',sans-serif;letter-spacing:1.062px;">(367)</div>
<svg class="a" style="left:943px;top:322.7px" width="10" height="7"><path d="M0.5 2.5 H5 V0.5 L9.5 3.5 L5 6.5 V4.5 H0.5 Z" fill="#b4b4b4"/></svg>
<div class="t" style="left:956.40px;top:320.70px;font-size:11px;line-height:11px;color:#2a7a2a;font-family:'Liberation Sans',sans-serif;letter-spacing:-0.196px;">Серфинг</div>
<div class="t" style="left:1000.50px;top:320.70px;font-size:11px;line-height:11px;color:#222;font-family:'Liberation Sans',sans-serif;letter-spacing:1.109px;">(67)</div>
<svg class="a" style="left:943px;top:336.2px" width="10" height="7"><path d="M0.5 2.5 H5 V0.5 L9.5 3.5 L5 6.5 V4.5 H0.5 Z" fill="#b4b4b4"/></svg>
<div class="t" style="left:956.40px;top:334.20px;font-size:11px;line-height:11px;color:#2a7a2a;font-family:'Liberation Sans',sans-serif;letter-spacing:0.130px;">Пожелания к систе...</div>
<div class="t" style="left:1065.00px;top:334.20px;font-size:11px;line-height:11px;color:#222;font-family:'Liberation Sans',sans-serif;letter-spacing:1.163px;">(558)</div>
<svg class="a" style="left:943px;top:350.0px" width="10" height="7"><path d="M0.5 2.5 H5 V0.5 L9.5 3.5 L5 6.5 V4.5 H0.5 Z" fill="#b4b4b4"/></svg>
<div class="t" style="left:956.40px;top:348.00px;font-size:11px;line-height:11px;color:#2a7a2a;font-family:'Liberation Sans',sans-serif;letter-spacing:-0.382px;">Web-ip CUP </div>
<div class="t" style="left:1016.00px;top:348.00px;font-size:11px;line-height:11px;color:#222;font-family:'Liberation Sans',sans-serif;letter-spacing:1.209px;">(52)</div>
<svg class="a" style="left:943px;top:364.2px" width="10" height="7"><path d="M0.5 2.5 H5 V0.5 L9.5 3.5 L5 6.5 V4.5 H0.5 Z" fill="#b4b4b4"/></svg>
<div class="t" style="left:956.40px;top:362.25px;font-size:11px;line-height:11px;color:#2a7a2a;font-family:'Liberation Sans',sans-serif;letter-spacing:-0.371px;">ВНИМАНИЕ КОНКУРС ...</div>
<div class="t" style="left:941.40px;top:375.50px;font-size:11px;line-height:11px;color:#222;font-family:'Liberation Sans',sans-serif;letter-spacing:0.863px;">(641)</div>
<svg class="a" style="left:943px;top:391.7px" width="10" height="7"><path d="M0.5 2.5 H5 V0.5 L9.5 3.5 L5 6.5 V4.5 H0.5 Z" fill="#b4b4b4"/></svg>
<div class="t" style="left:956.40px;top:389.70px;font-size:11px;line-height:11px;color:#2a7a2a;font-family:'Liberation Sans',sans-serif;letter-spacing:0.215px;">Для новичков сист...</div>
<div class="t" style="left:1063.60px;top:389.70px;font-size:11px;line-height:11px;color:#222;font-family:'Liberation Sans',sans-serif;letter-spacing:1.283px;">(673)</div>
<svg class="a" style="left:943px;top:405.5px" width="10" height="7"><path d="M0.5 2.5 H5 V0.5 L9.5 3.5 L5 6.5 V4.5 H0.5 Z" fill="#b4b4b4"/></svg>
<div class="t" style="left:956.40px;top:403.50px;font-size:11px;line-height:11px;color:#2a7a2a;font-family:'Liberation Sans',sans-serif;letter-spacing:0.386px;">Ставки</div>
<div class="t" style="left:994.50px;top:403.50px;font-size:11px;line-height:11px;color:#222;font-family:'Liberation Sans',sans-serif;letter-spacing:0.863px;">(457)</div>
<div class="t" style="left:941.50px;top:416.30px;font-size:12px;line-height:12px;color:#111;font-family:'Liberation Sans',sans-serif;font-weight:bold;-webkit-text-stroke:0.25px currentColor;letter-spacing:0.668px;">Курилка:</div>
<svg class="a" style="left:943px;top:432.5px" width="10" height="7"><path d="M0.5 2.5 H5 V0.5 L9.5 3.5 L5 6.5 V4.5 H0.5 Z" fill="#b4b4b4"/></svg>
<div class="t" style="left:956.40px;top:430.50px;font-size:11px;line-height:11px;color:#2a7a2a;font-family:'Liberation Sans',sans-serif;letter-spacing:-0.461px;">ВЫПОЛНЮ ЗАДАНИЯ П...</div>
<div class="t" style="left:941.40px;top:444.20px;font-size:11px;line-height:11px;color:#222;font-family:'Liberation Sans',sans-serif;letter-spacing:0.884px;">(14)</div>
<svg class="a" style="left:943px;top:459.5px" width="10" height="7"><path d="M0.5 2.5 H5 V0.5 L9.5 3.5 L5 6.5 V4.5 H0.5 Z" fill="#b4b4b4"/></svg>
<div class="t" style="left:956.40px;top:457.50px;font-size:11px;line-height:11px;color:#2a7a2a;font-family:'Liberation Sans',sans-serif;letter-spacing:0.024px;">Под дубом вековым...</div>
<div class="t" style="left:941.40px;top:471.60px;font-size:11px;line-height:11px;color:#222;font-family:'Liberation Sans',sans-serif;letter-spacing:0.863px;">(259)</div>
<svg class="a" style="left:943px;top:486.8px" width="10" height="7"><path d="M0.5 2.5 H5 V0.5 L9.5 3.5 L5 6.5 V4.5 H0.5 Z" fill="#b4b4b4"/></svg>
<div class="t" style="left:956.40px;top:484.80px;font-size:11px;line-height:11px;color:#2a7a2a;font-family:'Liberation Sans',sans-serif;letter-spacing:0.094px;">!!! Форменное без...</div>
<div class="t" style="left:1058.50px;top:484.80px;font-size:11px;line-height:11px;color:#222;font-family:'Liberation Sans',sans-serif;letter-spacing:1.282px;">(156)</div>
<div class="box" style="left:937px;top:517px;width:166px;height:147px"></div>
<div class="gh" style="left:937px;top:517px;width:166px"><div class="g1"></div><div class="g2"></div></div>
<div class="t" style="left:983.40px;top:522.70px;font-size:12px;line-height:12px;color:#2a2a2a;font-family:'Liberation Sans',sans-serif;letter-spacing:-0.077px;">Реклама</div>
<div class="a" style="left:1081px;top:526.5px;width:0;height:0;border-left:4.5px solid transparent;border-right:4.5px solid transparent;border-bottom:5px solid #111"></div>
<div class="a" style="left:1091px;top:527px;width:0;height:0;border-left:4.5px solid transparent;border-right:4.5px solid transparent;border-top:5px solid #111"></div>
<div class="a" style="left:969px;top:545px;width:102px;height:102px;background:#fc0000;border:1px solid #8a0000"></div>
<div class="t" style="left:977.50px;top:584.20px;font-size:19.5px;line-height:19.5px;color:#ffffff;font-family:'Liberation Sans',sans-serif;font-weight:bold;letter-spacing:1.303px;-webkit-text-stroke:1.6px #fff;">БОНУС</div>
<div class="a" style="left:1056.5px;top:585.5px;width:7px;height:11px;background:#fff;clip-path:polygon(0 0,100% 0,80% 100%,20% 100%)"></div>
<div class="a" style="left:1057px;top:597.5px;width:6px;height:3.5px;background:#fff"></div>
<div class="t" style="left:955.30px;top:647.50px;font-size:10.5px;line-height:10.5px;color:#222;font-family:'Liberation Sans',sans-serif;letter-spacing:-0.303px;">Разместить баннер 100x100</div>
<div class="box" style="left:937px;top:679px;width:166px;height:112px"></div>
<div class="gh" style="left:937px;top:679px;width:166px"><div class="g1"></div><div class="g2"></div></div>
<div class="t" style="left:975.20px;top:685.00px;font-size:12px;line-height:12px;color:#2a2a2a;font-family:'Liberation Sans',sans-serif;letter-spacing:0.428px;">Друзья проекта</div>
<div class="a" style="left:1081px;top:688.5px;width:0;height:0;border-left:4.5px solid transparent;border-right:4.5px solid transparent;border-bottom:5px solid #111"></div>
<div class="a" style="left:1091px;top:689px;width:0;height:0;border-left:4.5px solid transparent;border-right:4.5px solid transparent;border-top:5px solid #111"></div>
<div class="t" style="left:945.00px;top:709.40px;font-size:11.5px;line-height:11.5px;color:#222;font-family:'Liberation Sans',sans-serif;letter-spacing:0.247px;">--[</div>
<div class="t" style="left:960.00px;top:709.40px;font-size:11px;line-height:11px;color:#2a7a2a;font-family:'Liberation Sans',sans-serif;letter-spacing:-0.025px;">Web-студия «Spacelife»</div>
<div class="t" style="left:1083.90px;top:709.40px;font-size:11.5px;line-height:11.5px;color:#222;font-family:'Liberation Sans',sans-serif;letter-spacing:0.047px;">]--</div>
<div class="t" style="left:947.00px;top:724.50px;font-size:11.5px;line-height:11.5px;color:#222;font-family:'Liberation Sans',sans-serif;letter-spacing:0.280px;">--[</div>
<div class="t" style="left:962.10px;top:724.50px;font-size:11px;line-height:11px;color:#2a7a2a;font-family:'Liberation Sans',sans-serif;letter-spacing:0.092px;">IT работа в интернете</div>
<div class="t" style="left:1080.40px;top:724.50px;font-size:11.5px;line-height:11.5px;color:#222;font-family:'Liberation Sans',sans-serif;letter-spacing:0.247px;">]--</div>
<div class="t" style="left:967.00px;top:739.50px;font-size:11.5px;line-height:11.5px;color:#222;font-family:'Liberation Sans',sans-serif;letter-spacing:0.047px;">--[</div>
<div class="t" style="left:981.40px;top:739.50px;font-size:11px;line-height:11px;color:#2a7a2a;font-family:'Liberation Sans',sans-serif;letter-spacing:-0.466px;">COMP-INFO.RU</div>
<div class="t" style="left:1061.90px;top:739.50px;font-size:11.5px;line-height:11.5px;color:#222;font-family:'Liberation Sans',sans-serif;letter-spacing:0.047px;">]--</div>
</div>
<div class="a" style="left:1263px;top:116px;width:17px;height:634px;background:linear-gradient(90deg,#e4e4e4,#f2f2f2 40%,#ebebeb);border-left:1px solid #c2c5c9"></div>
<div class="a" style="left:1267px;top:122px;width:0;height:0;border-left:4px solid transparent;border-right:4px solid transparent;border-bottom:5px solid #4a5060"></div>
<div class="a" style="left:1264px;top:198px;width:16px;height:205px;border:1px solid #a7b4cc;border-radius:2px;background:linear-gradient(90deg,#c9d6f0,#e2e9fb 45%,#d3ddf4)"></div>
<div class="a" style="left:1268px;top:296px;width:8px;height:1px;background:#5a6478;box-shadow:0 3px 0 #5a6478,0 6px 0 #5a6478"></div>
<div class="a" style="left:1267px;top:738px;width:0;height:0;border-left:4px solid transparent;border-right:4px solid transparent;border-top:5px solid #4a5060"></div>
<div class="a" style="left:0;top:750px;width:1280px;height:1px;background:#7d848c"></div>
<div class="a" style="left:0;top:751px;width:1280px;height:19px;background:linear-gradient(#fbfcfd,#eef1f4 45%,#d9dfe5)"></div>
<svg class="a" style="left:0;top:750px" width="120" height="20">
 <g fill="#3e444c">
  <path d="M9 3.5 H14.5 L12.6 5.4 L15.5 8.3 L13.8 10 L10.9 7.1 L9 9 Z"/>
  <path d="M21 15.5 H15.5 L17.4 13.6 L14.5 10.7 L16.2 9 L19.1 11.9 L21 10 Z"/>
  <path d="M24 6.5 H31 L27.5 10.5 Z"/>
  <circle cx="44.5" cy="8" r="2.8"/><circle cx="52" cy="5" r="2.8"/><circle cx="51" cy="15" r="2.8"/>
  <path d="M44.5 8 Q49 10 52 5 M48.5 9.5 Q52 12 51 15" stroke="#3e444c" stroke-width="2.2" fill="none"/>
  <path d="M58 6.5 H65 L61.5 10.5 Z"/>
  <circle cx="82" cy="9.5" r="6.2"/>
  <path d="M96 6.5 H103 L99.5 10.5 Z"/>
 </g>
 <path d="M78.5 6 L83 10.5" stroke="#e8eaee" stroke-width="1.4"/>
</svg>
<svg class="a" style="left:1136px;top:751px" width="64" height="18">
 <path d="M4 6.5 L7.5 9.5 L4 12.5 Z" fill="#454b55"/>
 <path d="M9 3 H15 L16 5 H19 V15 H9 Z" fill="#3c4350"/>
 <path d="M23.5 6.5 L20 9.5 L23.5 12.5 Z" fill="#454b55"/>
 <rect x="36.5" y="2.5" width="13" height="13" fill="#f4f4f4" stroke="#555c66"/>
 <rect x="38" y="5" width="10" height="8" fill="#b8bcc0"/>
 <path d="M54 6 H61 L57.5 10 Z" fill="#454b55"/>
</svg>
<div class="a" style="left:1205px;top:752px;width:73px;height:18px;background:#fff;border:1px solid #c2c8cf"></div>
<div class="a" style="left:1261px;top:753px;width:16px;height:16px;background:linear-gradient(#f0f2f4,#d8dde2);border-left:1px solid #c8cdd3"></div>
<div class="a" style="left:1265px;top:759px;width:0;height:0;border-left:4.5px solid transparent;border-right:4.5px solid transparent;border-top:5px solid #555c66"></div>
<svg class="a" style="left:1207px;top:753px" width="16" height="16"><circle cx="6.5" cy="6.5" r="3.8" fill="none" stroke="#5e6670" stroke-width="1.8"/><path d="M9.5 9.5 L13.5 13.5" stroke="#5e6670" stroke-width="2.4"/></svg>
<div class="t" style="left:1226.00px;top:756.00px;font-size:11.5px;line-height:11.5px;color:#222;font-family:'Liberation Sans',sans-serif;letter-spacing:-0.355px;">100%</div>
<div class="a" style="left:0;top:770px;width:1280px;height:30px;background:linear-gradient(#54575c 0%,#46494e 25%,#2c2e32 48%,#0c0d0f 52%,#050506 100%)"></div>
<div class="a" style="left:0;top:770px;width:1280px;height:1px;background:#8d9196"></div>
<svg class="a" style="left:5px;top:764px" width="52" height="36" viewBox="0 0 52 36">
 <defs>
  <radialGradient id="orb" cx="50%" cy="85%" r="70%"><stop offset="0" stop-color="#40d0f8"/><stop offset=".45" stop-color="#1a78c0"/><stop offset=".85" stop-color="#0c3e78"/><stop offset="1" stop-color="#081c38"/></radialGradient>
  <linearGradient id="orbt" x1="0" y1="0" x2="0" y2="1"><stop offset="0" stop-color="#e8f0f4" stop-opacity=".85"/><stop offset="1" stop-color="#7ab8d8" stop-opacity=".15"/></linearGradient>
 </defs>
 <circle cx="25" cy="23.5" r="21" fill="#0a1624"/>
 <circle cx="25" cy="23.5" r="19.5" fill="url(#orb)"/>
 <ellipse cx="25" cy="12" rx="14" ry="8" fill="url(#orbt)" opacity=".8"/>
 <path d="M14.5 9.5 Q20 7 26 9.5 L24.5 19 Q19 17 12.5 19 Z" fill="#f06a28"/>
 <path d="M26.5 10 Q31.5 12.5 37 10.5 L35 21 Q30 23 24.8 20 Z" fill="#88c43a"/>
 <path d="M12 20 Q18 18 24 20.5 L22 31 Q16 29 9.5 31 Z" fill="#3aa8e8"/>
 <path d="M24.5 21.5 Q30 24 35 22 L33 32.5 Q28 34 22.5 32 Z" fill="#f8c030"/>
</svg>
<svg class="a" style="left:64px;top:776px" width="60" height="18">
 <circle cx="8.5" cy="8.5" r="7.5" fill="#e8e4e4"/><circle cx="8.5" cy="8" r="6" fill="#d02a30"/><path d="M4 11 L6.5 5 L8.5 9 L10.5 5 L13 11 Z" fill="#f4f0f0"/>
 <ellipse cx="32.5" cy="9" rx="7" ry="6" fill="none" stroke="#e8b830" stroke-width="1.4" transform="rotate(-30 32.5 9)"/>
 <text x="25.5" y="15" font-family="Liberation Sans" font-size="17" font-weight="bold" fill="#2a90e0">e</text>
 <rect x="47" y="3" width="13" height="12" fill="#e8f0f8" stroke="#5a8ac8"/><rect x="48.5" y="5" width="10" height="8" fill="#2a5aa8"/><rect x="50" y="6.5" width="4" height="2" fill="#e8f0f8"/><rect x="52" y="9.5" width="5" height="2" fill="#e8f0f8"/>
</svg>
<div class="t" style="left:144.00px;top:771.00px;font-size:13px;line-height:13px;color:#e8e8e8;font-family:'Liberation Sans',sans-serif;font-weight:bold;-webkit-text-stroke:0.25px currentColor;">»</div>
<div class="a" style="left:162px;top:772px;width:157px;height:27px;border:1px solid #5c5f64;border-radius:3px;background:linear-gradient(#2a2c30,#131416 50%,#060607);box-shadow:inset 0 1px 0 rgba(255,255,255,.12)"></div>
<svg class="a" style="left:171px;top:778px" width="17" height="15"><ellipse cx="8" cy="7.5" rx="7.5" ry="7" fill="#e0262a"/><ellipse cx="8" cy="7.5" rx="3" ry="5" fill="#3a0606"/></svg>
<div class="t" style="left:190.80px;top:779.60px;font-size:12.5px;line-height:12.5px;color:#f4f4f4;font-family:'Liberation Sans',sans-serif;letter-spacing:-0.487px;">WEB-IP.RU - РАСКР...</div>
<div class="a" style="left:322px;top:772px;width:157px;height:27px;border:1px solid #5c5f64;border-radius:3px;background:linear-gradient(#77797e,#56595e 48%,#1a1b1d 54%,#0a0a0b);box-shadow:inset 0 1px 0 rgba(255,255,255,.15)"></div>
<svg class="a" style="left:330px;top:777px" width="16" height="17"><rect x="2.5" y="2.5" width="11" height="13" fill="#a8d8ec" stroke="#dfeff6"/><path d="M4 5 H12 M4 7.5 H12 M4 10 H12 M4 12.5 H12" stroke="#6aa8c8" stroke-width=".8"/></svg>
<div class="t" style="left:350.30px;top:779.60px;font-size:12.5px;line-height:12.5px;color:#f4f4f4;font-family:'Liberation Sans',sans-serif;letter-spacing:-0.380px;">Новый текстовый д...</div>
<div class="t" style="left:1073.00px;top:778.00px;font-size:11.5px;line-height:11.5px;color:#e8e8e8;font-family:'Liberation Sans',sans-serif;letter-spacing:-0.992px;">EN</div>
<svg class="a" style="left:1100px;top:774px" width="128" height="22">
 <path d="M9.5 7 L5 11 L9.5 15" fill="none" stroke="#e4e4e4" stroke-width="2.4"/>
 <rect x="18" y="4" width="13" height="10" fill="#222a40" stroke="#c8ccd4"/><text x="18.5" y="10.5" font-family="Liberation Mono" font-size="7" font-weight="bold" fill="#f0e020">99</text><rect x="20" y="16" width="9" height="1.5" fill="#aab"/>
 <circle cx="42.5" cy="11" r="6" fill="#8a6a2a"/><circle cx="42.5" cy="10" r="3.5" fill="#c8a04a"/>
 <path d="M54 6 Q50 11 54 16" stroke="#c8c040" stroke-width="2" fill="none"/><path d="M60 3 V14 M56 11 L60 16 L64 11" stroke="#9ab830" stroke-width="2.2" fill="none"/><circle cx="61" cy="4" r="2" fill="#ddd"/>
 <rect x="84" y="6" width="6" height="11" rx="1" fill="#eee"/><rect x="89" y="4" width="7" height="14" rx="1" fill="#a8e0a8" stroke="#eee"/><path d="M82 9 H86 M82 12 H86" stroke="#eee" stroke-width="1.5"/>
 <rect x="100.5" y="4.5" width="9" height="8" fill="#3a7ac8" stroke="#dde"/><rect x="104.5" y="8.5" width="9" height="8" fill="#3a7ac8" stroke="#dde"/><circle cx="112" cy="17" r="3" fill="#2ab0a0"/>
 <path d="M118 8 H121 L125 4.5 V17.5 L121 14 H118 Z" fill="#e0e0e0"/>
</svg>
<div class="t" style="left:1239.60px;top:778.00px;font-size:11.5px;line-height:11.5px;color:#eeeeee;font-family:'Liberation Sans',sans-serif;letter-spacing:-0.416px;">14:59</div>
</body></html>
